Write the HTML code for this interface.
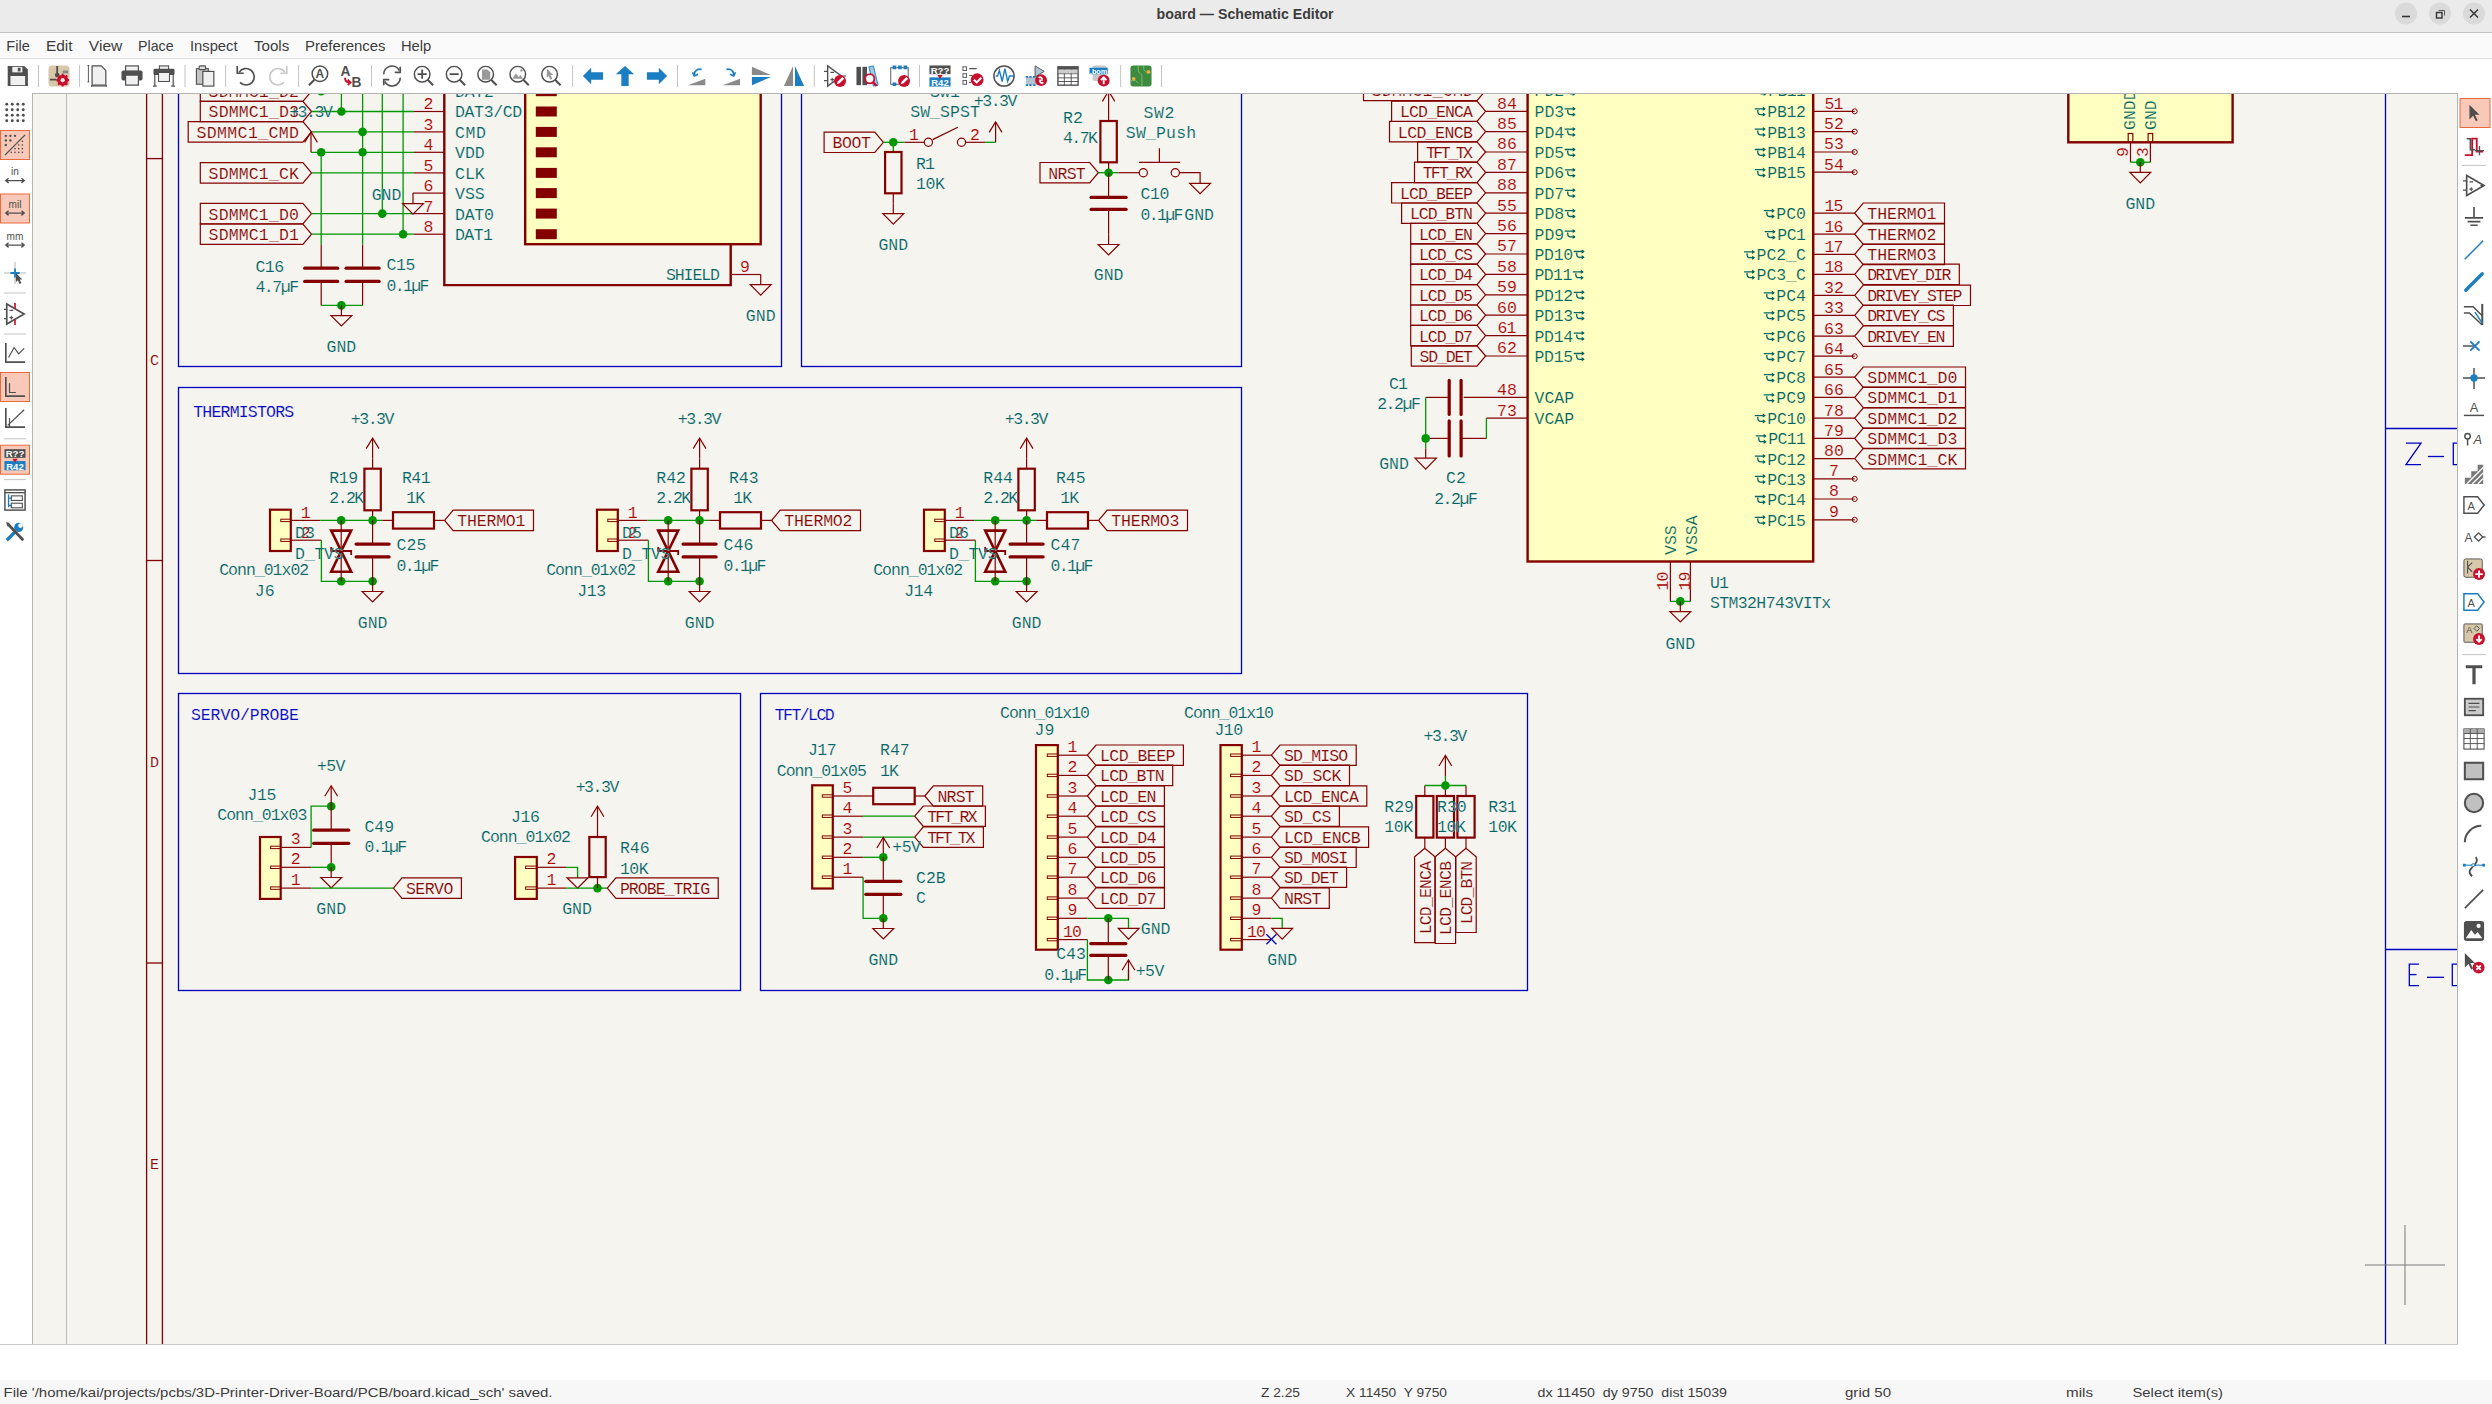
<!DOCTYPE html>
<html><head><meta charset="utf-8">
<style>
html,body{margin:0;padding:0;width:2492px;height:1404px;overflow:hidden;background:#ffffff;font-family:"Liberation Sans",sans-serif;}
#title{position:absolute;left:0;top:0;width:2492px;height:32px;background:#ebebeb;border-bottom:1px solid #c4c4c4;}
#title .t{position:absolute;left:0;width:2492px;top:5px;text-align:center;font-size:15.5px;font-weight:bold;color:#3d3d3d;}
#menu{position:absolute;left:0;top:33px;width:2492px;height:25px;background:#fafafa;border-bottom:1px solid #e0e0e0;}
#menu span{position:absolute;top:4px;font-size:15px;color:#3c3c3c;}
#tb{position:absolute;left:0;top:59px;width:2492px;height:34px;background:#ffffff;}
#status{position:absolute;left:0;top:1380px;width:2492px;height:24px;background:#f7f7f7;}
#status span{position:absolute;top:4px;font-size:14px;color:#3c3c3c;white-space:pre;}
svg text{font-family:"Liberation Sans",sans-serif;}
.cv text{font-family:"Liberation Mono",monospace;stroke:#f5f4ef;stroke-width:0.15px;paint-order:normal;}
.cv text.y{stroke:#ffffc2;}
</style></head><body>
<div id="title">
<svg style="position:absolute;left:2380px;top:0" width="112" height="32">
<circle cx="26" cy="13.5" r="11" fill="#dadada"/><line x1="22" y1="16.5" x2="30" y2="16.5" stroke="#333" stroke-width="1.6"/>
<circle cx="60" cy="13.5" r="11" fill="#dadada"/><rect x="56.5" y="12.5" width="5.5" height="5.5" fill="none" stroke="#333" stroke-width="1.4"/><polyline points="58.5,10.5 64.5,10.5 64.5,15.5" fill="none" stroke="#555" stroke-width="1"/>
<circle cx="94" cy="13.5" r="11" fill="#dadada"/><line x1="90" y1="9.5" x2="98" y2="17.5" stroke="#333" stroke-width="1.5"/><line x1="98" y1="9.5" x2="90" y2="17.5" stroke="#333" stroke-width="1.5"/>
</svg></div>
<div id="menu"></div>
<div id="tb"></div>
<svg style="position:absolute;left:0;top:0" width="1200" height="93"><g transform="translate(6.8,65) scale(0.9167)"><path d="M1,1 h18 l4,4 v18 h-22 z" fill="#4f4f4f"/><rect x="6" y="2" width="11" height="6" fill="#f0f0f0"/><rect x="12" y="3" width="3" height="4" fill="#4f4f4f"/><rect x="4" y="12" width="16" height="10" fill="#f0f0f0"/></g><line x1="38.5" y1="65" x2="38.5" y2="87" stroke="#c4c4c4" stroke-width="1"/><g transform="translate(48.0,65) scale(0.9167)"><rect x="0.5" y="0.5" width="23" height="23" rx="4" fill="#d6c8a8"/><path d="M10,1 v9 M2,16 h7" stroke="#4f4f4f" stroke-width="2"/><circle cx="10" cy="11" r="2.5" fill="#4f4f4f"/><rect x="16" y="6" width="6" height="3" fill="#888"/><circle cx="16" cy="16.5" r="6" fill="#c8102e"/><circle cx="16" cy="16.5" r="2.3" fill="#f2e6e6"/><path d="M16,9.5 v2 M16,21.5 v2 M9,16.5 h2 M21,16.5 h2 M11,11.5 l1.5,1.5 M19.5,20 l1.5,1.5 M11,21.5 l1.5,-1.5 M19.5,13 l1.5,-1.5" stroke="#c8102e" stroke-width="2.2"/></g><line x1="79.5" y1="65" x2="79.5" y2="87" stroke="#c4c4c4" stroke-width="1"/><g transform="translate(87.5,65) scale(0.9167)"><path d="M5,1 h10 l5,5 v16 h-15 z" fill="#f0f0f0" stroke="#4f4f4f" stroke-width="1.3"/><path d="M1,0.5 v18 M0,0.5 h2 M0,18.5 h2 M4.5,23 h16 M4.5,22 v2 M20.5,22 v2" stroke="#4f4f4f" stroke-width="1"/></g><g transform="translate(121.0,65) scale(0.9167)"><rect x="5" y="1" width="14" height="6" fill="#f0f0f0" stroke="#4f4f4f" stroke-width="1.3"/><rect x="0.5" y="6" width="23" height="11" rx="2" fill="#4f4f4f"/><path d="M5,11 h14 v11 h-14 z" fill="#f0f0f0" stroke="#4f4f4f" stroke-width="1.3"/></g><g transform="translate(153.0,65) scale(0.9167)"><rect x="7" y="1" width="10" height="4" fill="#f0f0f0" stroke="#4f4f4f" stroke-width="1.2"/><rect x="0.5" y="4" width="23" height="7" rx="1.5" fill="#4f4f4f"/><path d="M6,8 h12 v10 h-12 z" fill="#f0f0f0" stroke="#4f4f4f" stroke-width="1.2"/><path d="M2,10 v13 M22,10 v13 M0,23 h4 M20,23 h4" stroke="#4f4f4f" stroke-width="1.3"/></g><line x1="185" y1="65" x2="185" y2="87" stroke="#c4c4c4" stroke-width="1"/><g transform="translate(195.5,65) scale(0.9167)"><rect x="1" y="4" width="13" height="17" fill="#c4c4c4" stroke="#4f4f4f" stroke-width="1.2"/><rect x="4" y="1" width="7" height="4" rx="1" fill="#ddd" stroke="#4f4f4f" stroke-width="1.2"/><rect x="8" y="7" width="12" height="16" fill="#f0f0f0" stroke="#4f4f4f" stroke-width="1.3"/></g><line x1="225.6" y1="65" x2="225.6" y2="87" stroke="#c4c4c4" stroke-width="1"/><g transform="translate(234.5,65) scale(0.9167)"><path d="M5,8 A9,9 0 1 1 6,19" fill="none" stroke="#4f4f4f" stroke-width="1.8"/><path d="M3,1 v8 h7" fill="none" stroke="#4f4f4f" stroke-width="1.8"/></g><g transform="translate(267.5,65) scale(0.9167)"><path d="M19,8 A9,9 0 1 0 18,19" fill="none" stroke="#c8c8c8" stroke-width="1.8"/><path d="M21,1 v8 h-7" fill="none" stroke="#c8c8c8" stroke-width="1.8"/></g><line x1="298.6" y1="65" x2="298.6" y2="87" stroke="#c4c4c4" stroke-width="1"/><g transform="translate(308.0,65) scale(0.9167)"><circle cx="13" cy="9.5" r="8.5" fill="none" stroke="#4f4f4f" stroke-width="1.6"/><path d="M7,16 l-6,6" stroke="#4f4f4f" stroke-width="2.2"/><text x="13" y="14.5" font-size="13" font-weight="bold" text-anchor="middle" fill="#4f4f4f" font-family="Liberation Sans">A</text></g><g transform="translate(340.0,65) scale(0.9167)"><text x="6" y="12" font-size="15" font-weight="bold" text-anchor="middle" fill="#4f4f4f" font-family="Liberation Sans">A</text><text x="18" y="24" font-size="15" font-weight="bold" text-anchor="middle" fill="#4f4f4f" font-family="Liberation Sans">B</text><path d="M5.5,14 q0,5 5,5" fill="none" stroke="#c8102e" stroke-width="2.2"/><path d="M8.5,16 l3,3 l-3,3" fill="none" stroke="#c8102e" stroke-width="2"/></g><line x1="371.5" y1="65" x2="371.5" y2="87" stroke="#c4c4c4" stroke-width="1"/><g transform="translate(381.0,65) scale(0.9167)"><path d="M3,10 A9,9 0 0 1 20,6" fill="none" stroke="#4f4f4f" stroke-width="1.8"/><path d="M21,2 v6 h-6" fill="none" stroke="#4f4f4f" stroke-width="1.8"/><path d="M21,14 A9,9 0 0 1 4,18" fill="none" stroke="#4f4f4f" stroke-width="1.8"/><path d="M3,22 v-6 h6" fill="none" stroke="#4f4f4f" stroke-width="1.8"/></g><g transform="translate(413.0,65) scale(0.9167)"><circle cx="10" cy="10" r="8.5" fill="none" stroke="#4f4f4f" stroke-width="1.6"/><path d="M16,16 l6,6" stroke="#4f4f4f" stroke-width="2.2"/><path d="M10,5 v10 M5,10 h10" stroke="#4f4f4f" stroke-width="2"/></g><g transform="translate(445.0,65) scale(0.9167)"><circle cx="10" cy="10" r="8.5" fill="none" stroke="#4f4f4f" stroke-width="1.6"/><path d="M16,16 l6,6" stroke="#4f4f4f" stroke-width="2.2"/><path d="M5,10 h10" stroke="#4f4f4f" stroke-width="2"/></g><g transform="translate(476.5,65) scale(0.9167)"><circle cx="10" cy="10" r="8.5" fill="none" stroke="#4f4f4f" stroke-width="1.6"/><path d="M16,16 l6,6" stroke="#4f4f4f" stroke-width="2.2"/><path d="M6,5 h6 l3,3 v8 h-9 z" fill="#9a9a9a"/></g><g transform="translate(508.6,65) scale(0.9167)"><circle cx="10" cy="10" r="8.5" fill="none" stroke="#4f4f4f" stroke-width="1.6"/><path d="M16,16 l6,6" stroke="#4f4f4f" stroke-width="2.2"/><path d="M4,15 l4,-6 l3,4 l2,-2 l3,4 z" fill="#9a9a9a"/><circle cx="14" cy="6" r="1.3" fill="#9a9a9a"/></g><g transform="translate(540.4,65) scale(0.9167)"><circle cx="10" cy="10" r="8.5" fill="none" stroke="#4f4f4f" stroke-width="1.6"/><path d="M16,16 l6,6" stroke="#4f4f4f" stroke-width="2.2"/><path d="M7,4 l7,7 h-3 l2,4 l-2,1 l-2,-4 l-2,2 z" fill="#9a9a9a"/></g><line x1="572.6" y1="65" x2="572.6" y2="87" stroke="#c4c4c4" stroke-width="1"/><g transform="translate(582.0,65) scale(0.9167)"><path d="M1,12 l9,-9 v5 h13 v8 h-13 v5 z" fill="#1b7ec2"/></g><g transform="translate(614.0,65) scale(0.9167)"><path d="M12,1 l10,9 h-6 v13 h-8 v-13 h-6 z" fill="#1b7ec2"/></g><g transform="translate(646.0,65) scale(0.9167)"><path d="M23,12 l-9,-9 v5 h-13 v8 h13 v5 z" fill="#1b7ec2"/></g><line x1="677.5" y1="65" x2="677.5" y2="87" stroke="#c4c4c4" stroke-width="1"/><g transform="translate(687.0,65) scale(0.9167)"><path d="M1,22 l19,-7 v7 z" fill="#8a8a8a"/><path d="M8,12 a6,6 0 0 1 8,-7" fill="none" stroke="#1b7ec2" stroke-width="1.8"/><path d="M6,8 l2,4 l4,-2" fill="none" stroke="#1b7ec2" stroke-width="1.8"/></g><g transform="translate(719.0,65) scale(0.9167)"><path d="M4,22 l19,-7 v7 z" fill="#8a8a8a"/><path d="M16,12 a6,6 0 0 0 -8,-7" fill="none" stroke="#1b7ec2" stroke-width="1.8"/><path d="M18,8 l-2,4 l-4,-2" fill="none" stroke="#1b7ec2" stroke-width="1.8"/></g><g transform="translate(751.0,65) scale(0.9167)"><path d="M1,2 l21,9 h-21 z" fill="#8a8a8a"/><path d="M1,13 h21 l-21,9 z" fill="#1b7ec2"/></g><g transform="translate(783.0,65) scale(0.9167)"><path d="M11,1 v22 h-10 z" fill="#8a8a8a"/><path d="M13,1 v22 h10 z" fill="#1b7ec2"/></g><line x1="814.3" y1="65" x2="814.3" y2="87" stroke="#c4c4c4" stroke-width="1"/><g transform="translate(824.0,65) scale(0.9167)"><path d="M4,1 v22 l15,-11 z" fill="none" stroke="#4f4f4f" stroke-width="1.5"/><path d="M0,7 h4 M0,17 h4 M19,12 h5 M7,8 h4 M7,16 h4 M9,14 v4" stroke="#4f4f4f" stroke-width="1.2"/><circle cx="17.5" cy="17.5" r="6.5" fill="#c8102e"/><path d="M14,21 l1,-3 l5,-5 l2,2 l-5,5 z" fill="#fff"/></g><g transform="translate(856.0,65) scale(0.9167)"><rect x="0.5" y="2" width="5" height="20" fill="#4f4f4f"/><rect x="7" y="2" width="5" height="20" fill="#4f4f4f"/><path d="M14,2 l5,-1 l5,21 l-5,1 z" fill="#9fc8e0" stroke="#1b7ec2" stroke-width="1"/><circle cx="15" cy="15" r="5" fill="#fff" stroke="#c8102e" stroke-width="2"/><path d="M18.5,18.5 l4,4.5" stroke="#c8102e" stroke-width="2.5"/></g><g transform="translate(888.0,65) scale(0.9167)"><rect x="3" y="3" width="19" height="18" fill="none" stroke="#4f4f4f" stroke-width="1"/><path d="M5,0.5 h4 v4 h-4 z M11,0.5 h4 v4 h-4 z M17,0.5 h4 v4 h-4 z M5,19 h4 v4 h-4 z" fill="#1b7ec2"/><circle cx="17.5" cy="17.5" r="6.5" fill="#c8102e"/><path d="M14,21 l1,-3 l5,-5 l2,2 l-5,5 z" fill="#fff"/></g><line x1="919.5" y1="65" x2="919.5" y2="87" stroke="#c4c4c4" stroke-width="1"/><g transform="translate(929.0,65) scale(0.9167)"><rect x="0.5" y="0.5" width="23" height="9.5" fill="#4f4f4f"/><text x="12" y="9.3" font-size="10.5" font-weight="bold" text-anchor="middle" fill="#fff" font-family="Liberation Sans">R??</text><rect x="0.5" y="13.5" width="23" height="10" fill="#1b7ec2"/><text x="12" y="22.8" font-size="10.5" font-weight="bold" text-anchor="middle" fill="#fff" font-family="Liberation Sans">R42</text><path d="M9,11 h6 l-3,4 z" fill="#c8102e"/></g><g transform="translate(962.0,65) scale(0.9167)"><rect x="1" y="2" width="4" height="4" fill="none" stroke="#4f4f4f" stroke-width="1"/><rect x="1" y="9.5" width="4" height="4" fill="none" stroke="#4f4f4f" stroke-width="1"/><rect x="1" y="17" width="4" height="4" fill="none" stroke="#4f4f4f" stroke-width="1"/><path d="M8,4 h8 M8,11.5 h3 M8,19 h2" stroke="#4f4f4f" stroke-width="1.2"/><circle cx="16.5" cy="16" r="7" fill="#c8102e"/><path d="M13,16 l3,3 l5,-5" fill="none" stroke="#fff" stroke-width="2.2"/></g><g transform="translate(993.0,65) scale(0.9167)"><circle cx="12" cy="12" r="11" fill="none" stroke="#4f4f4f" stroke-width="1.6"/><path d="M3,12 h2 l2,-6 l3,12 l3,-14 l3,14 l2,-6 h5" fill="none" stroke="#1b7ec2" stroke-width="1.5"/></g><g transform="translate(1025.0,65) scale(0.9167)"><path d="M11,1 v12 l10,-6 z" fill="#b0c4d4" stroke="#4f4f4f" stroke-width="1"/><rect x="1" y="13" width="13" height="9" fill="#b0c4d4"/><path d="M2,12 v2 M6,12 v2 M10,12 v2 M2,21 v2 M6,21 v2 M10,21 v2" stroke="#1b7ec2" stroke-width="2.5"/><circle cx="17.5" cy="16.5" r="6.5" fill="#c8102e"/><path d="M15,14 a2,2 0 0 1 3,3 M20,19 a2,2 0 0 1 -3,-3" fill="none" stroke="#fff" stroke-width="1.8"/></g><g transform="translate(1057.0,65) scale(0.9167)"><rect x="1" y="2" width="22" height="20" fill="#fff" stroke="#4f4f4f" stroke-width="1.5"/><rect x="1" y="2" width="22" height="3" fill="#4f4f4f"/><path d="M1,9.5 h22 M1,14 h22 M1,18 h22 M8,5 v17 M15.5,5 v17" stroke="#4f4f4f" stroke-width="1"/><rect x="2" y="5.5" width="20" height="3.5" fill="#ccc"/></g><g transform="translate(1089.0,65) scale(0.9167)"><rect x="4" y="0.5" width="15" height="17" rx="2" fill="#c8c8c8"/><rect x="0.5" y="3" width="20" height="7" fill="#1b7ec2"/><text x="10.5" y="9.5" font-size="8" font-weight="bold" text-anchor="middle" fill="#fff" font-family="Liberation Sans">.bom</text><circle cx="16" cy="17" r="6.5" fill="#c8102e"/><path d="M16,21 v-7 M13,16.5 l3,-3 l3,3" fill="none" stroke="#fff" stroke-width="2"/></g><line x1="1120.6" y1="65" x2="1120.6" y2="87" stroke="#c4c4c4" stroke-width="1"/><g transform="translate(1130.0,65) scale(0.9167)"><rect x="0.5" y="0.5" width="23" height="23" rx="3" fill="#3e8a3e"/><path d="M9,1 v6 l4,4 v12 M15,1 v4 l3,3 h6 M1,17 h5 l3,3" fill="none" stroke="#7cbf6a" stroke-width="1"/><circle cx="4" cy="15" r="2" fill="#f0b040"/><circle cx="20" cy="7.5" r="2" fill="#f0b040"/></g><line x1="1161.5" y1="65" x2="1161.5" y2="87" stroke="#c4c4c4" stroke-width="1"/></svg><svg style="position:absolute;left:0;top:93px" width="32" height="1251"><g transform="translate(0,-93)"><g transform="translate(4,101.5) scale(0.9167)"><circle cx="3" cy="3" r="1.6" fill="#4f4f4f"/><circle cx="3" cy="9" r="1.6" fill="#4f4f4f"/><circle cx="3" cy="15" r="1.6" fill="#4f4f4f"/><circle cx="3" cy="21" r="1.6" fill="#4f4f4f"/><circle cx="9" cy="3" r="1.6" fill="#4f4f4f"/><circle cx="9" cy="9" r="1.6" fill="#4f4f4f"/><circle cx="9" cy="15" r="1.6" fill="#4f4f4f"/><circle cx="9" cy="21" r="1.6" fill="#4f4f4f"/><circle cx="15" cy="3" r="1.6" fill="#4f4f4f"/><circle cx="15" cy="9" r="1.6" fill="#4f4f4f"/><circle cx="15" cy="15" r="1.6" fill="#4f4f4f"/><circle cx="15" cy="21" r="1.6" fill="#4f4f4f"/><circle cx="21" cy="3" r="1.6" fill="#4f4f4f"/><circle cx="21" cy="9" r="1.6" fill="#4f4f4f"/><circle cx="21" cy="15" r="1.6" fill="#4f4f4f"/><circle cx="21" cy="21" r="1.6" fill="#4f4f4f"/></g><rect x="0.5" y="130.5" width="29" height="29" fill="#f8c9b8" stroke="#ea6a3c" stroke-width="1"/><g transform="translate(4,134.0) scale(0.9167)"><circle cx="2" cy="2" r="1.3" fill="#4f4f4f"/><circle cx="7" cy="2" r="1.3" fill="#4f4f4f"/><circle cx="12" cy="2" r="1.3" fill="#4f4f4f"/><circle cx="2" cy="7" r="1.3" fill="#4f4f4f"/><circle cx="7" cy="7" r="1.3" fill="#4f4f4f"/><circle cx="2" cy="12" r="1.3" fill="#4f4f4f"/><circle cx="20" cy="8" r="0.9" fill="#4f4f4f"/><circle cx="16" cy="12" r="0.9" fill="#4f4f4f"/><circle cx="20" cy="12" r="0.9" fill="#4f4f4f"/><circle cx="12" cy="16" r="0.9" fill="#4f4f4f"/><circle cx="16" cy="16" r="0.9" fill="#4f4f4f"/><circle cx="20" cy="16" r="0.9" fill="#4f4f4f"/><circle cx="8" cy="20" r="0.9" fill="#4f4f4f"/><circle cx="12" cy="20" r="0.9" fill="#4f4f4f"/><circle cx="16" cy="20" r="0.9" fill="#4f4f4f"/><circle cx="20" cy="20" r="0.9" fill="#4f4f4f"/><path d="M1,23 L23,1" stroke="#4f4f4f" stroke-width="1.4"/></g><g transform="translate(4,165.0) scale(0.9167)"><text x="12" y="11" font-size="11" text-anchor="middle" fill="#4f4f4f" font-family="Liberation Sans">in</text><path d="M2,17 h20 M5,14.5 l-3,2.5 l3,2.5 M19,14.5 l3,2.5 l-3,2.5" fill="none" stroke="#4f4f4f" stroke-width="1.5"/></g><rect x="0.5" y="194.0" width="29" height="29" fill="#f8c9b8" stroke="#ea6a3c" stroke-width="1"/><g transform="translate(4,197.5) scale(0.9167)"><text x="12" y="11" font-size="11" text-anchor="middle" fill="#4f4f4f" font-family="Liberation Sans">mil</text><path d="M2,17 h20 M5,14.5 l-3,2.5 l3,2.5 M19,14.5 l3,2.5 l-3,2.5" fill="none" stroke="#4f4f4f" stroke-width="1.5"/></g><g transform="translate(4,229.5) scale(0.9167)"><text x="12" y="11" font-size="11" text-anchor="middle" fill="#4f4f4f" font-family="Liberation Sans">mm</text><path d="M2,17 h20 M5,14.5 l-3,2.5 l3,2.5 M19,14.5 l3,2.5 l-3,2.5" fill="none" stroke="#4f4f4f" stroke-width="1.5"/></g><g transform="translate(4,262.0) scale(0.9167)"><path d="M12,0 v24 M0,12 h24" stroke="#999" stroke-width="0.8"/><path d="M12,7 v10 M7,12 h10" stroke="#1b7ec2" stroke-width="2"/><path d="M13,12 l7,7 h-3 l2,4 l-2,1 l-2,-4 l-2,2 z" fill="#4f4f4f"/></g><line x1="4" y1="293" x2="26" y2="293" stroke="#c4c4c4" stroke-width="1"/><g transform="translate(4,303.0) scale(0.9167)"><path d="M3,1 v22 l19,-11 z" fill="none" stroke="#4f4f4f" stroke-width="1.8"/><path d="M0,7 h3 M0,17 h3 M6,8 h4 M6,16 h4 M8,14 v4" stroke="#4f4f4f" stroke-width="1.2"/><path d="M12,0 v6 M12,18 v6" stroke="#c8102e" stroke-width="1.8"/></g><line x1="4" y1="334" x2="26" y2="334" stroke="#c4c4c4" stroke-width="1"/><g transform="translate(4,342.0) scale(0.9167)"><path d="M2,1 v21 h21" fill="none" stroke="#4f4f4f" stroke-width="1.8"/><path d="M5,17 l6,-11 l5,7 l6,-6" fill="none" stroke="#4f4f4f" stroke-width="1.3"/></g><rect x="0.5" y="372.5" width="29" height="29" fill="#f8c9b8" stroke="#ea6a3c" stroke-width="1"/><g transform="translate(4,376.0) scale(0.9167)"><path d="M2,1 v21 h21" fill="none" stroke="#4f4f4f" stroke-width="1.8"/><path d="M6,8 v10 h7" fill="none" stroke="#4f4f4f" stroke-width="1.3"/></g><g transform="translate(4,407.0) scale(0.9167)"><path d="M2,1 v21 h21" fill="none" stroke="#4f4f4f" stroke-width="1.8"/><path d="M4,20 l18,-17 M6,12 v10" fill="none" stroke="#4f4f4f" stroke-width="1.3"/></g><line x1="4" y1="438.8" x2="26" y2="438.8" stroke="#c4c4c4" stroke-width="1"/><rect x="0.5" y="445.2" width="29" height="29" fill="#f8c9b8" stroke="#ea6a3c" stroke-width="1"/><g transform="translate(4,448.7) scale(0.9167)"><rect x="0.5" y="0.5" width="23" height="9.5" fill="#4f4f4f"/><text x="12" y="9.3" font-size="10.5" font-weight="bold" text-anchor="middle" fill="#fff" font-family="Liberation Sans">R??</text><rect x="0.5" y="13.5" width="23" height="10" fill="#1b7ec2"/><text x="12" y="22.8" font-size="10.5" font-weight="bold" text-anchor="middle" fill="#fff" font-family="Liberation Sans">R42</text><path d="M9,11 h6 l-3,4 z" fill="#c8102e"/></g><line x1="4" y1="479.6" x2="26" y2="479.6" stroke="#c4c4c4" stroke-width="1"/><g transform="translate(4,489.0) scale(0.9167)"><rect x="1" y="1" width="22" height="22" fill="none" stroke="#4f4f4f" stroke-width="1.6"/><path d="M1,4 h22" stroke="#4f4f4f" stroke-width="1.5"/><path d="M5,6 v14 M5,10 h3 M5,18 h3" stroke="#1b7ec2" stroke-width="1.5"/><rect x="8" y="7.5" width="12" height="5" fill="none" stroke="#4f4f4f" stroke-width="1.2"/><rect x="8" y="15.5" width="12" height="5" fill="none" stroke="#4f4f4f" stroke-width="1.2"/></g><g transform="translate(4,521.0) scale(0.9167)"><path d="M3,21 l9,-9" stroke="#1b7ec2" stroke-width="3.5"/><circle cx="16" cy="7" r="5" fill="#1b7ec2"/><circle cx="18" cy="5" r="2.5" fill="#fafafa"/><path d="M4,3 l17,18" stroke="#4f4f4f" stroke-width="3"/><path d="M2,1 l3,1 l1,3 l-2,1 z" fill="#4f4f4f"/></g></g></svg>
<svg style="position:absolute;left:0;top:0" width="2492" height="1404" pointer-events="none"><rect x="2460" y="98.5" width="30" height="29" fill="#f8c9b8" stroke="#ea6a3c" stroke-width="1"/><g transform="translate(2463,102.0) scale(0.9167)"><path d="M7,3 l11,11 h-5 l3,6 l-2,1 l-3,-6 l-4,4 z" fill="#4f4f4f"/></g><g transform="translate(2463,135.0) scale(0.9167)"><path d="M2,22 h8 v-18 h5 v14 h7" fill="none" stroke="#c8102e" stroke-width="2"/><path d="M4,4 h4 v12 h5" fill="none" stroke="#4f4f4f" stroke-width="1.6"/><path d="M18,12 v10 M13,17 h10" stroke="#4f4f4f" stroke-width="1.4"/></g><line x1="2462" y1="165.4" x2="2486" y2="165.4" stroke="#c4c4c4" stroke-width="1"/><g transform="translate(2463,174.5) scale(0.9167)"><path d="M4,1 v22 l19,-11 z" fill="none" stroke="#4f4f4f" stroke-width="1.8"/><path d="M0,7 h4 M0,17 h4 M19,12 h5 M7,8 h4 M7,16 h4 M9,14 v4" stroke="#4f4f4f" stroke-width="1.2"/></g><g transform="translate(2463,206.0) scale(0.9167)"><path d="M12,1 v12 M2,13 h20 M5,17 h14 M8,21 h8" stroke="#4f4f4f" stroke-width="1.8"/></g><g transform="translate(2463,239.0) scale(0.9167)"><path d="M2,22 L22,2" stroke="#1b7ec2" stroke-width="1.6"/></g><g transform="translate(2463,271.0) scale(0.9167)"><path d="M3,21 L21,3" stroke="#1b7ec2" stroke-width="3.6" stroke-linecap="round"/></g><g transform="translate(2463,303.0) scale(0.9167)"><path d="M21,1 v23" stroke="#4f4f4f" stroke-width="2.2"/><path d="M1,4 h10 l10,10 M1,11 h6 l14,13" fill="none" stroke="#4f4f4f" stroke-width="1.6"/><path d="M13,10 l8,12" stroke="#1b7ec2" stroke-width="1.6"/></g><g transform="translate(2463,335.0) scale(0.9167)"><path d="M0,12 h12" stroke="#4f4f4f" stroke-width="1.6"/><path d="M8,7 l10,10 M18,7 l-10,10" stroke="#1b7ec2" stroke-width="2"/></g><g transform="translate(2463,367.0) scale(0.9167)"><path d="M0,12 h24 M12,1 v23" stroke="#4f4f4f" stroke-width="1.6"/><circle cx="12" cy="12" r="4" fill="#1b7ec2"/></g><g transform="translate(2463,398.0) scale(0.9167)"><text x="12" y="15" font-size="14" text-anchor="middle" fill="#4f4f4f" font-family="Liberation Sans">A</text><path d="M1,19 h22" stroke="#4f4f4f" stroke-width="1.6"/></g><g transform="translate(2463,429.0) scale(0.9167)"><circle cx="5" cy="8" r="3" fill="none" stroke="#4f4f4f" stroke-width="1.6"/><path d="M5,11 v7" stroke="#4f4f4f" stroke-width="1.6"/><text x="16" y="16" font-size="14" font-style="italic" text-anchor="middle" fill="#4f4f4f" font-family="Liberation Sans">A</text></g><g transform="translate(2463,463.0) scale(0.9167)"><path d="M2,23 v-7 h7 v-7 h7 v-7 h6 v21 z" fill="#777"/><path d="M10,23 l12,-12 M4,23 l18,-18 M16,23 l6,-6" stroke="#fafafa" stroke-width="1.5"/></g><g transform="translate(2463,494.0) scale(0.9167)"><path d="M1,3 h15 l7,9 l-7,9 h-15 z" fill="none" stroke="#4f4f4f" stroke-width="1.6"/><text x="9" y="17" font-size="12" text-anchor="middle" fill="#4f4f4f" font-family="Liberation Sans">A</text><path d="M22,12 h2" stroke="#1b7ec2" stroke-width="1.5"/></g><g transform="translate(2463,526.0) scale(0.9167)"><text x="6" y="17" font-size="13" text-anchor="middle" fill="#4f4f4f" font-family="Liberation Sans">A</text><path d="M17,7.5 l4.5,4.5 l-4.5,4.5 l-4.5,-4.5 z" fill="none" stroke="#4f4f4f" stroke-width="1.5"/><path d="M21.5,12 h3" stroke="#4f4f4f" stroke-width="1.5"/></g><g transform="translate(2463,558.0) scale(0.9167)"><rect x="1" y="1" width="20" height="20" rx="2" fill="#d6c8a8" stroke="#4f4f4f" stroke-width="1"/><path d="M5,3 v14 M5,10 l5,-5 M5,10 l5,5" stroke="#4f4f4f" stroke-width="1.2"/><circle cx="17.5" cy="17.5" r="6.5" fill="#c8102e"/><path d="M17.5,13.5 v8 M13.5,17.5 h8" stroke="#fff" stroke-width="2"/></g><g transform="translate(2463,591.0) scale(0.9167)"><path d="M1,3 h15 l7,9 l-7,9 h-15 z" fill="none" stroke="#1b7ec2" stroke-width="1.6"/><text x="9" y="17" font-size="12" text-anchor="middle" fill="#4f4f4f" font-family="Liberation Sans">A</text></g><g transform="translate(2463,623.0) scale(0.9167)"><rect x="1" y="1" width="20" height="20" rx="1" fill="#d6c8a8" stroke="#4f4f4f" stroke-width="1"/><text x="7" y="11" font-size="10" text-anchor="middle" fill="#4f4f4f" font-family="Liberation Sans">A</text><path d="M15,3 l3,3 l-3,3 l-3,-3 z" fill="none" stroke="#4f4f4f" stroke-width="1"/><circle cx="17.5" cy="17.5" r="6.5" fill="#c8102e"/><path d="M17.5,13.5 v7 M14.5,17.5 l3,3 l3,-3" fill="none" stroke="#fff" stroke-width="2"/></g><line x1="2462" y1="654.6" x2="2486" y2="654.6" stroke="#c4c4c4" stroke-width="1"/><g transform="translate(2463,664.0) scale(0.9167)"><path d="M3,3 h18 M12,3 v19" stroke="#4f4f4f" stroke-width="3.5"/></g><g transform="translate(2463,696.0) scale(0.9167)"><rect x="2" y="3" width="20" height="18" fill="#ccc" stroke="#4f4f4f" stroke-width="2"/><path d="M6,8 h12 M6,12 h12 M6,16 h8" stroke="#4f4f4f" stroke-width="1.2"/></g><g transform="translate(2463,728.0) scale(0.9167)"><rect x="1" y="1" width="22" height="22" fill="#fff" stroke="#4f4f4f" stroke-width="1.2"/><rect x="1" y="1" width="22" height="5" fill="#aaa"/><path d="M1,6 h22 M1,11.5 h22 M1,17 h22 M8,1 v22 M15.5,1 v22" stroke="#4f4f4f" stroke-width="1"/></g><g transform="translate(2463,760.0) scale(0.9167)"><rect x="2" y="3" width="20" height="18" fill="#c0c0c0" stroke="#4f4f4f" stroke-width="2.2"/></g><g transform="translate(2463,792.0) scale(0.9167)"><circle cx="12" cy="12" r="10" fill="#c0c0c0" stroke="#4f4f4f" stroke-width="2.2"/></g><g transform="translate(2463,824.0) scale(0.9167)"><path d="M2,20 A18,18 0 0 1 20,2" fill="none" stroke="#4f4f4f" stroke-width="2.2"/></g><g transform="translate(2463,856.0) scale(0.9167)"><path d="M10,22 C0,14 20,10 14,1" fill="none" stroke="#4f4f4f" stroke-width="2"/><path d="M1,10 h22" stroke="#1b7ec2" stroke-width="1.2"/><rect x="0" y="8.5" width="3" height="3" fill="#1b7ec2"/><rect x="21" y="8.5" width="3" height="3" fill="#1b7ec2"/><circle cx="11" cy="10" r="1.6" fill="#fff" stroke="#1b7ec2" stroke-width="1"/></g><g transform="translate(2463,888.0) scale(0.9167)"><path d="M2,22 L22,2" stroke="#4f4f4f" stroke-width="1.8"/></g><g transform="translate(2463,920.0) scale(0.9167)"><rect x="1" y="1" width="22" height="22" rx="3" fill="#4f4f4f"/><path d="M3,20 l6,-9 l4,5 l3,-3 l5,7 z" fill="#fafafa"/><circle cx="17" cy="6.5" r="2.3" fill="#fafafa"/></g><g transform="translate(2463,952.0) scale(0.9167)"><path d="M2,1 l11,11 h-5 l3,6 l-2,1 l-3,-6 l-4,4 z" fill="#4f4f4f"/><circle cx="17" cy="17" r="6.5" fill="#c8102e"/><path d="M14.5,14.5 l5,5 M19.5,14.5 l-5,5" stroke="#fff" stroke-width="2"/></g></svg>
<svg class="cv" style="position:absolute;left:0;top:0" width="2492" height="1404">
<defs><clipPath id="cv"><rect x="33" y="94" width="2424" height="1250"/></clipPath></defs>
<rect x="32.5" y="93.5" width="2425" height="1251" fill="#f5f4ef" stroke="#b4b4b4" stroke-width="1"/><line x1="0" y1="1344.5" x2="2458" y2="1344.5" stroke="#c8c8c8" stroke-width="1"/>
<g clip-path="url(#cv)">
<line x1="66.5" y1="94.0" x2="66.5" y2="1344.0" stroke="#b9b9b9" stroke-width="1"/>
<line x1="146.6" y1="94.0" x2="146.6" y2="1344.0" stroke="#840000" stroke-width="1.3"/>
<line x1="162.4" y1="94.0" x2="162.4" y2="1344.0" stroke="#840000" stroke-width="1.3"/>
<line x1="146.6" y1="158.6" x2="162.4" y2="158.6" stroke="#840000" stroke-width="1.3"/>
<line x1="146.6" y1="560.5" x2="162.4" y2="560.5" stroke="#840000" stroke-width="1.3"/>
<line x1="146.6" y1="963.0" x2="162.4" y2="963.0" stroke="#840000" stroke-width="1.3"/>
<text x="154.4" y="364.9" fill="#840000" font-size="15" text-anchor="middle">C</text>
<text x="154.4" y="767.2" fill="#840000" font-size="15" text-anchor="middle">D</text>
<text x="154.4" y="1169.2" fill="#840000" font-size="15" text-anchor="middle">E</text>
<line x1="2385.5" y1="94.0" x2="2385.5" y2="1344.0" stroke="#0000c2" stroke-width="1.3"/>
<line x1="2385.5" y1="428.5" x2="2458.0" y2="428.5" stroke="#0000c2" stroke-width="1.3"/>
<line x1="2385.5" y1="949.5" x2="2458.0" y2="949.5" stroke="#0000c2" stroke-width="1.3"/>
<polyline points="2406.0,443.2 2421.0,443.2 2406.0,464.6 2421.0,464.6" stroke="#0000c2" stroke-width="1.3" fill="none"/>
<line x1="2428.0" y1="456.5" x2="2444.0" y2="456.5" stroke="#0000c2" stroke-width="1.3"/>
<polyline points="2460.0,443.2 2453.3,443.2 2453.3,464.6 2460.0,464.6" stroke="#0000c2" stroke-width="1.3" fill="none"/>
<polyline points="2419.0,964.2 2409.3,964.2 2409.3,985.6 2419.0,985.6" stroke="#0000c2" stroke-width="1.3" fill="none"/>
<line x1="2409.3" y1="974.6" x2="2416.5" y2="974.6" stroke="#0000c2" stroke-width="1.3"/>
<line x1="2427.0" y1="977.3" x2="2444.0" y2="977.3" stroke="#0000c2" stroke-width="1.3"/>
<polyline points="2460.0,964.2 2452.3,964.2 2452.3,985.6 2460.0,985.6" stroke="#0000c2" stroke-width="1.3" fill="none"/>
<line x1="2365.0" y1="1265.0" x2="2445.0" y2="1265.0" stroke="#7a7a7a" stroke-width="1"/>
<line x1="2405.0" y1="1225.0" x2="2405.0" y2="1305.0" stroke="#7a7a7a" stroke-width="1"/>
<rect x="178.5" y="60.0" width="603.0" height="306.5" stroke="#0000c2" stroke-width="1.3" fill="none"/>
<polygon points="311.5,91.2 302.9,81.0 200.3,81.0 200.3,101.4 302.9,101.4" stroke="#840000" stroke-width="1.2" fill="none"/>
<text x="208.6" y="97.1" fill="#840000" font-size="16.5" text-anchor="start" textLength="90.3" lengthAdjust="spacing">SDMMC1_D2</text>
<polygon points="311.5,111.5 302.9,101.3 200.3,101.3 200.3,121.7 302.9,121.7" stroke="#840000" stroke-width="1.2" fill="none"/>
<text x="208.6" y="117.4" fill="#840000" font-size="16.5" text-anchor="start" textLength="90.3" lengthAdjust="spacing">SDMMC1_D3</text>
<polygon points="311.5,131.9 302.9,121.7 188.2,121.7 188.2,142.1 302.9,142.1" stroke="#840000" stroke-width="1.2" fill="none"/>
<text x="196.5" y="137.8" fill="#840000" font-size="16.5" text-anchor="start" textLength="102.4" lengthAdjust="spacing">SDMMC1_CMD</text>
<polygon points="311.5,172.9 302.9,162.7 200.3,162.7 200.3,183.1 302.9,183.1" stroke="#840000" stroke-width="1.2" fill="none"/>
<text x="208.6" y="178.8" fill="#840000" font-size="16.5" text-anchor="start" textLength="90.3" lengthAdjust="spacing">SDMMC1_CK</text>
<polygon points="311.5,213.6 302.9,203.4 200.3,203.4 200.3,223.8 302.9,223.8" stroke="#840000" stroke-width="1.2" fill="none"/>
<text x="208.6" y="219.5" fill="#840000" font-size="16.5" text-anchor="start" textLength="90.3" lengthAdjust="spacing">SDMMC1_D0</text>
<polygon points="311.5,234.2 302.9,224.0 200.3,224.0 200.3,244.4 302.9,244.4" stroke="#840000" stroke-width="1.2" fill="none"/>
<text x="208.6" y="240.1" fill="#840000" font-size="16.5" text-anchor="start" textLength="90.3" lengthAdjust="spacing">SDMMC1_D1</text>
<polyline points="311.5,91.2 414.0,91.2" stroke="#009600" stroke-width="1.3" fill="none"/>
<polyline points="311.5,111.5 414.0,111.5" stroke="#009600" stroke-width="1.3" fill="none"/>
<polyline points="311.5,131.9 414.0,131.9" stroke="#009600" stroke-width="1.3" fill="none"/>
<polyline points="311.5,172.9 414.0,172.9" stroke="#009600" stroke-width="1.3" fill="none"/>
<polyline points="311.5,213.6 414.0,213.6" stroke="#009600" stroke-width="1.3" fill="none"/>
<polyline points="311.5,234.2 414.0,234.2" stroke="#009600" stroke-width="1.3" fill="none"/>
<polyline points="311.0,152.3 414.0,152.3" stroke="#009600" stroke-width="1.3" fill="none"/>
<polyline points="341.4,94.0 341.4,111.5" stroke="#009600" stroke-width="1.3" fill="none"/>
<polyline points="362.6,94.0 362.6,244.7" stroke="#009600" stroke-width="1.3" fill="none"/>
<polyline points="382.3,94.0 382.3,213.6" stroke="#009600" stroke-width="1.3" fill="none"/>
<polyline points="403.1,94.0 403.1,234.2" stroke="#009600" stroke-width="1.3" fill="none"/>
<polyline points="321.2,152.3 321.2,244.7" stroke="#009600" stroke-width="1.3" fill="none"/>
<circle cx="321.2" cy="91.2" r="4.3" fill="#009600"/>
<circle cx="341.4" cy="111.5" r="4.3" fill="#009600"/>
<circle cx="362.6" cy="131.9" r="4.3" fill="#009600"/>
<circle cx="321.2" cy="152.3" r="4.3" fill="#009600"/>
<circle cx="362.6" cy="152.3" r="4.3" fill="#009600"/>
<circle cx="382.3" cy="213.6" r="4.3" fill="#009600"/>
<circle cx="403.1" cy="234.2" r="4.3" fill="#009600"/>
<line x1="311.0" y1="152.3" x2="311.0" y2="131.9" stroke="#840000" stroke-width="1.2"/>
<polyline points="304.6,142.4 311.0,131.9 317.4,142.4" stroke="#840000" stroke-width="1.2" fill="none"/>
<text x="311.0" y="117.4" fill="#006464" font-size="16.5" text-anchor="middle" textLength="43.7" lengthAdjust="spacing">+3.3V</text>
<line x1="414.0" y1="91.2" x2="444.3" y2="91.2" stroke="#840000" stroke-width="1.2"/>
<text x="428.5" y="89.1" fill="#a90000" font-size="16.5" text-anchor="middle" textLength="9.0" lengthAdjust="spacing">1</text>
<line x1="414.0" y1="111.5" x2="444.3" y2="111.5" stroke="#840000" stroke-width="1.2"/>
<text x="428.5" y="109.4" fill="#a90000" font-size="16.5" text-anchor="middle" textLength="9.9" lengthAdjust="spacing">2</text>
<line x1="414.0" y1="131.9" x2="444.3" y2="131.9" stroke="#840000" stroke-width="1.2"/>
<text x="428.5" y="129.8" fill="#a90000" font-size="16.5" text-anchor="middle" textLength="9.9" lengthAdjust="spacing">3</text>
<line x1="414.0" y1="152.3" x2="444.3" y2="152.3" stroke="#840000" stroke-width="1.2"/>
<text x="428.5" y="150.2" fill="#a90000" font-size="16.5" text-anchor="middle" textLength="9.9" lengthAdjust="spacing">4</text>
<line x1="414.0" y1="172.9" x2="444.3" y2="172.9" stroke="#840000" stroke-width="1.2"/>
<text x="428.5" y="170.8" fill="#a90000" font-size="16.5" text-anchor="middle" textLength="9.9" lengthAdjust="spacing">5</text>
<line x1="414.0" y1="193.1" x2="444.3" y2="193.1" stroke="#840000" stroke-width="1.2"/>
<text x="428.5" y="191.0" fill="#a90000" font-size="16.5" text-anchor="middle" textLength="9.9" lengthAdjust="spacing">6</text>
<line x1="414.0" y1="213.6" x2="444.3" y2="213.6" stroke="#840000" stroke-width="1.2"/>
<text x="428.5" y="211.5" fill="#a90000" font-size="16.5" text-anchor="middle" textLength="9.9" lengthAdjust="spacing">7</text>
<line x1="414.0" y1="234.2" x2="444.3" y2="234.2" stroke="#840000" stroke-width="1.2"/>
<text x="428.5" y="232.1" fill="#a90000" font-size="16.5" text-anchor="middle" textLength="9.9" lengthAdjust="spacing">8</text>
<text x="455.0" y="97.1" fill="#006464" font-size="16.5" text-anchor="start" textLength="38.9" lengthAdjust="spacing">DAT2</text>
<text x="455.0" y="117.4" fill="#006464" font-size="16.5" text-anchor="start" textLength="67.2" lengthAdjust="spacing">DAT3/CD</text>
<text x="455.0" y="137.8" fill="#006464" font-size="16.5" text-anchor="start" textLength="30.8" lengthAdjust="spacing">CMD</text>
<text x="455.0" y="158.2" fill="#006464" font-size="16.5" text-anchor="start" textLength="29.7" lengthAdjust="spacing">VDD</text>
<text x="455.0" y="178.8" fill="#006464" font-size="16.5" text-anchor="start" textLength="29.7" lengthAdjust="spacing">CLK</text>
<text x="455.0" y="199.0" fill="#006464" font-size="16.5" text-anchor="start" textLength="29.7" lengthAdjust="spacing">VSS</text>
<text x="455.0" y="219.5" fill="#006464" font-size="16.5" text-anchor="start" textLength="38.9" lengthAdjust="spacing">DAT0</text>
<text x="455.0" y="240.1" fill="#006464" font-size="16.5" text-anchor="start" textLength="38.0" lengthAdjust="spacing">DAT1</text>
<line x1="414.0" y1="193.1" x2="413.0" y2="193.1" stroke="#840000" stroke-width="1.2"/>
<line x1="413.0" y1="193.1" x2="413.0" y2="203.7" stroke="#840000" stroke-width="1.2"/>
<polygon points="402.6,203.7 423.4,203.7 413.0,214.1" stroke="#840000" stroke-width="1.2" fill="none"/>
<text x="386.5" y="199.7" fill="#006464" font-size="16.5" text-anchor="middle" textLength="29.7" lengthAdjust="spacing">GND</text>
<polyline points="444.3,60.0 444.3,285.1 730.7,285.1 730.7,244.2" stroke="#840000" stroke-width="2.4" fill="none"/>
<rect x="525.2" y="60.0" width="235.5" height="184.2" stroke="#840000" stroke-width="2.4" fill="#ffffc2"/>
<rect x="535.8" y="86.2" width="21.0" height="10.0" fill="#840000"/>
<rect x="535.8" y="106.5" width="21.0" height="10.0" fill="#840000"/>
<rect x="535.8" y="126.9" width="21.0" height="10.0" fill="#840000"/>
<rect x="535.8" y="147.3" width="21.0" height="10.0" fill="#840000"/>
<rect x="535.8" y="167.9" width="21.0" height="10.0" fill="#840000"/>
<rect x="535.8" y="188.1" width="21.0" height="10.0" fill="#840000"/>
<rect x="535.8" y="208.6" width="21.0" height="10.0" fill="#840000"/>
<rect x="535.8" y="229.2" width="21.0" height="10.0" fill="#840000"/>
<text x="719.8" y="280.4" fill="#006464" font-size="16.5" text-anchor="end" textLength="53.7" lengthAdjust="spacing">SHIELD</text>
<line x1="730.7" y1="274.5" x2="760.7" y2="274.5" stroke="#840000" stroke-width="1.2"/>
<text x="745.0" y="271.9" fill="#a90000" font-size="16.5" text-anchor="middle" textLength="9.9" lengthAdjust="spacing">9</text>
<line x1="760.7" y1="274.5" x2="760.7" y2="284.7" stroke="#840000" stroke-width="1.2"/>
<polygon points="750.3,284.7 771.1,284.7 760.7,295.1" stroke="#840000" stroke-width="1.2" fill="none"/>
<text x="760.7" y="321.4" fill="#006464" font-size="16.5" text-anchor="middle" textLength="29.7" lengthAdjust="spacing">GND</text>
<line x1="321.2" y1="244.7" x2="321.2" y2="268.2" stroke="#840000" stroke-width="1.2"/>
<line x1="362.6" y1="244.7" x2="362.6" y2="268.2" stroke="#840000" stroke-width="1.2"/>
<line x1="304.7" y1="268.2" x2="337.7" y2="268.2" stroke="#840000" stroke-width="3.2" stroke-linecap="round"/>
<line x1="304.7" y1="281.4" x2="337.7" y2="281.4" stroke="#840000" stroke-width="3.2" stroke-linecap="round"/>
<line x1="346.1" y1="268.2" x2="379.1" y2="268.2" stroke="#840000" stroke-width="3.2" stroke-linecap="round"/>
<line x1="346.1" y1="281.4" x2="379.1" y2="281.4" stroke="#840000" stroke-width="3.2" stroke-linecap="round"/>
<line x1="321.2" y1="281.4" x2="321.2" y2="305.4" stroke="#840000" stroke-width="1.2"/>
<line x1="362.6" y1="281.4" x2="362.6" y2="305.4" stroke="#840000" stroke-width="1.2"/>
<polyline points="321.2,305.4 362.6,305.4" stroke="#009600" stroke-width="1.3" fill="none"/>
<circle cx="341.4" cy="305.4" r="4.3" fill="#009600"/>
<line x1="341.4" y1="305.4" x2="341.4" y2="315.6" stroke="#840000" stroke-width="1.2"/>
<polygon points="331.0,315.6 351.8,315.6 341.4,326.0" stroke="#840000" stroke-width="1.2" fill="none"/>
<text x="341.4" y="352.3" fill="#006464" font-size="16.5" text-anchor="middle" textLength="29.7" lengthAdjust="spacing">GND</text>
<text x="255.4" y="272.1" fill="#006464" font-size="16.5" text-anchor="start" textLength="28.8" lengthAdjust="spacing">C16</text>
<text x="255.4" y="291.9" fill="#006464" font-size="16.5" text-anchor="start" textLength="43.7" lengthAdjust="spacing">4.7µF</text>
<text x="386.6" y="270.3" fill="#006464" font-size="16.5" text-anchor="start" textLength="28.8" lengthAdjust="spacing">C15</text>
<text x="386.6" y="290.5" fill="#006464" font-size="16.5" text-anchor="start" textLength="42.8" lengthAdjust="spacing">0.1µF</text>
<rect x="801.5" y="60.0" width="440.0" height="306.5" stroke="#0000c2" stroke-width="1.3" fill="none"/>
<polygon points="883.4,142.3 874.8,132.1 824.1,132.1 824.1,152.5 874.8,152.5" stroke="#840000" stroke-width="1.2" fill="none"/>
<text x="832.4" y="148.2" fill="#840000" font-size="16.5" text-anchor="start" textLength="38.4" lengthAdjust="spacing">BOOT</text>
<polyline points="883.4,142.3 904.7,142.3" stroke="#009600" stroke-width="1.3" fill="none"/>
<circle cx="893.3" cy="142.3" r="4.3" fill="#009600"/>
<line x1="904.7" y1="142.3" x2="924.3" y2="142.3" stroke="#840000" stroke-width="1.2"/>
<circle cx="928.4" cy="142.3" r="4.1" fill="none" stroke="#840000" stroke-width="1.2"/>
<circle cx="961.5" cy="142.3" r="4.1" fill="none" stroke="#840000" stroke-width="1.2"/>
<line x1="932.6" y1="139.6" x2="957.8" y2="127.2" stroke="#840000" stroke-width="1.2"/>
<text x="914.0" y="140.3" fill="#a90000" font-size="16.5" text-anchor="middle" textLength="9.0" lengthAdjust="spacing">1</text>
<text x="975.0" y="140.3" fill="#a90000" font-size="16.5" text-anchor="middle" textLength="9.9" lengthAdjust="spacing">2</text>
<line x1="965.6" y1="142.3" x2="985.2" y2="142.3" stroke="#840000" stroke-width="1.2"/>
<polyline points="985.2,142.3 995.6,142.3" stroke="#009600" stroke-width="1.3" fill="none"/>
<line x1="995.6" y1="142.3" x2="995.6" y2="121.9" stroke="#840000" stroke-width="1.2"/>
<polyline points="989.2,132.4 995.6,121.9 1002.0,132.4" stroke="#840000" stroke-width="1.2" fill="none"/>
<text x="995.6" y="106.4" fill="#006464" font-size="16.5" text-anchor="middle" textLength="43.7" lengthAdjust="spacing">+3.3V</text>
<text x="945.0" y="116.9" fill="#006464" font-size="16.5" text-anchor="middle" textLength="69.6" lengthAdjust="spacing">SW_SPST</text>
<text x="945.0" y="96.9" fill="#006464" font-size="16.5" text-anchor="middle" textLength="29.9" lengthAdjust="spacing">SW1</text>
<polyline points="893.3,142.3 893.3,152.0" stroke="#009600" stroke-width="1.3" fill="none"/>
<rect x="885.1" y="152.0" width="16.4" height="41.3" stroke="#840000" stroke-width="2.2" fill="none"/>
<line x1="893.3" y1="193.3" x2="893.3" y2="203.5" stroke="#840000" stroke-width="1.2"/>
<line x1="893.3" y1="203.5" x2="893.3" y2="213.7" stroke="#840000" stroke-width="1.2"/>
<polygon points="882.9,213.7 903.7,213.7 893.3,224.1" stroke="#840000" stroke-width="1.2" fill="none"/>
<text x="893.3" y="249.9" fill="#006464" font-size="16.5" text-anchor="middle" textLength="29.7" lengthAdjust="spacing">GND</text>
<text x="916.0" y="168.6" fill="#006464" font-size="16.5" text-anchor="start" textLength="18.9" lengthAdjust="spacing">R1</text>
<text x="916.0" y="188.9" fill="#006464" font-size="16.5" text-anchor="start" textLength="28.8" lengthAdjust="spacing">10K</text>
<line x1="1108.6" y1="94.0" x2="1108.6" y2="121.0" stroke="#840000" stroke-width="1.2"/>
<polyline points="1102.4,101.4 1108.6,91.0 1114.8,101.4" stroke="#840000" stroke-width="1.2" fill="none"/>
<rect x="1100.4" y="121.0" width="16.4" height="41.3" stroke="#840000" stroke-width="2.2" fill="none"/>
<line x1="1108.6" y1="162.3" x2="1108.6" y2="172.6" stroke="#840000" stroke-width="1.2"/>
<text x="1063.0" y="123.4" fill="#006464" font-size="16.5" text-anchor="start" textLength="19.8" lengthAdjust="spacing">R2</text>
<text x="1063.0" y="143.4" fill="#006464" font-size="16.5" text-anchor="start" textLength="34.9" lengthAdjust="spacing">4.7K</text>
<polygon points="1098.3,172.7 1089.7,162.5 1040.0,162.5 1040.0,182.9 1089.7,182.9" stroke="#840000" stroke-width="1.2" fill="none"/>
<text x="1048.3" y="178.6" fill="#840000" font-size="16.5" text-anchor="start" textLength="37.4" lengthAdjust="spacing">NRST</text>
<polyline points="1098.3,172.7 1118.5,172.7" stroke="#009600" stroke-width="1.3" fill="none"/>
<circle cx="1108.6" cy="172.7" r="4.3" fill="#009600"/>
<line x1="1118.5" y1="172.7" x2="1139.2" y2="172.7" stroke="#840000" stroke-width="1.2"/>
<circle cx="1143.3" cy="172.7" r="4.1" fill="none" stroke="#840000" stroke-width="1.2"/>
<circle cx="1175.3" cy="172.7" r="4.1" fill="none" stroke="#840000" stroke-width="1.2"/>
<line x1="1139.0" y1="162.3" x2="1180.0" y2="162.3" stroke="#840000" stroke-width="1.2"/>
<line x1="1159.4" y1="148.3" x2="1159.4" y2="162.3" stroke="#840000" stroke-width="1.2"/>
<polyline points="1179.4,172.7 1200.1,172.7 1200.1,183.4" stroke="#840000" stroke-width="1.2" fill="none"/>
<polygon points="1189.7,183.4 1210.5,183.4 1200.1,193.6" stroke="#840000" stroke-width="1.2" fill="none"/>
<text x="1184.3" y="219.5" fill="#006464" font-size="16.5" text-anchor="start" textLength="29.7" lengthAdjust="spacing">GND</text>
<text x="1159.0" y="117.6" fill="#006464" font-size="16.5" text-anchor="middle" textLength="30.8" lengthAdjust="spacing">SW2</text>
<text x="1161.0" y="138.3" fill="#006464" font-size="16.5" text-anchor="middle" textLength="70.3" lengthAdjust="spacing">SW_Push</text>
<line x1="1108.6" y1="172.7" x2="1108.6" y2="197.4" stroke="#840000" stroke-width="1.2"/>
<line x1="1091.1" y1="197.4" x2="1126.1" y2="197.4" stroke="#840000" stroke-width="3.2" stroke-linecap="round"/>
<line x1="1091.1" y1="209.4" x2="1126.1" y2="209.4" stroke="#840000" stroke-width="3.2" stroke-linecap="round"/>
<line x1="1108.6" y1="209.4" x2="1108.6" y2="234.3" stroke="#840000" stroke-width="1.2"/>
<line x1="1108.6" y1="234.3" x2="1108.6" y2="244.5" stroke="#840000" stroke-width="1.2"/>
<polygon points="1098.2,244.5 1119.0,244.5 1108.6,254.9" stroke="#840000" stroke-width="1.2" fill="none"/>
<text x="1108.6" y="280.4" fill="#006464" font-size="16.5" text-anchor="middle" textLength="29.7" lengthAdjust="spacing">GND</text>
<text x="1140.6" y="198.6" fill="#006464" font-size="16.5" text-anchor="start" textLength="28.8" lengthAdjust="spacing">C10</text>
<text x="1140.6" y="219.9" fill="#006464" font-size="16.5" text-anchor="start" textLength="42.8" lengthAdjust="spacing">0.1µF</text>
<rect x="1527.6" y="60.0" width="285.6" height="501.5" stroke="#840000" stroke-width="2.4" fill="#ffffc2"/>
<polygon points="1485.6,90.5 1477.0,80.3 1363.5,80.3 1363.5,100.7 1477.0,100.7" stroke="#840000" stroke-width="1.2" fill="none"/>
<text x="1371.8" y="96.4" fill="#840000" font-size="16.5" text-anchor="start" textLength="101.2" lengthAdjust="spacing">SDMMC1_CMD</text>
<line x1="1485.6" y1="90.5" x2="1527.6" y2="90.5" stroke="#840000" stroke-width="1.2"/>
<text x="1507.0" y="87.9" fill="#a90000" font-size="16.5" text-anchor="middle" textLength="19.8" lengthAdjust="spacing">83</text>
<text class="y" x="1534.5" y="96.4" fill="#006464" font-size="16.5" text-anchor="start" textLength="29.7" lengthAdjust="spacing">PD2</text>
<path d="M1564.7,88.0 h10 M1567.7,89.3 v1.2 q0,3.3 3,3.3 h4" stroke="#006464" stroke-width="1.3" fill="none"/><path d="M1575.7,88.0 l-3,-2.2 v4.4 z M1575.7,93.8 l-3,-2.2 v4.4 z" fill="#006464"/>
<polygon points="1485.6,111.3 1477.0,101.1 1391.6,101.1 1391.6,121.5 1477.0,121.5" stroke="#840000" stroke-width="1.2" fill="none"/>
<text x="1399.9" y="117.2" fill="#840000" font-size="16.5" text-anchor="start" textLength="73.1" lengthAdjust="spacing">LCD_ENCA</text>
<line x1="1485.6" y1="111.3" x2="1527.6" y2="111.3" stroke="#840000" stroke-width="1.2"/>
<text x="1507.0" y="108.7" fill="#a90000" font-size="16.5" text-anchor="middle" textLength="19.8" lengthAdjust="spacing">84</text>
<text class="y" x="1534.5" y="117.2" fill="#006464" font-size="16.5" text-anchor="start" textLength="29.7" lengthAdjust="spacing">PD3</text>
<path d="M1564.7,108.8 h10 M1567.7,110.1 v1.2 q0,3.3 3,3.3 h4" stroke="#006464" stroke-width="1.3" fill="none"/><path d="M1575.7,108.8 l-3,-2.2 v4.4 z M1575.7,114.6 l-3,-2.2 v4.4 z" fill="#006464"/>
<polygon points="1485.6,131.6 1477.0,121.4 1389.5,121.4 1389.5,141.8 1477.0,141.8" stroke="#840000" stroke-width="1.2" fill="none"/>
<text x="1397.8" y="137.5" fill="#840000" font-size="16.5" text-anchor="start" textLength="75.2" lengthAdjust="spacing">LCD_ENCB</text>
<line x1="1485.6" y1="131.6" x2="1527.6" y2="131.6" stroke="#840000" stroke-width="1.2"/>
<text x="1507.0" y="129.0" fill="#a90000" font-size="16.5" text-anchor="middle" textLength="19.8" lengthAdjust="spacing">85</text>
<text class="y" x="1534.5" y="137.5" fill="#006464" font-size="16.5" text-anchor="start" textLength="29.7" lengthAdjust="spacing">PD4</text>
<path d="M1564.7,129.1 h10 M1567.7,130.4 v1.2 q0,3.3 3,3.3 h4" stroke="#006464" stroke-width="1.3" fill="none"/><path d="M1575.7,129.1 l-3,-2.2 v4.4 z M1575.7,134.9 l-3,-2.2 v4.4 z" fill="#006464"/>
<polygon points="1485.6,152.0 1477.0,141.8 1417.6,141.8 1417.6,162.2 1477.0,162.2" stroke="#840000" stroke-width="1.2" fill="none"/>
<text x="1425.9" y="157.9" fill="#840000" font-size="16.5" text-anchor="start" textLength="47.1" lengthAdjust="spacing">TFT_TX</text>
<line x1="1485.6" y1="152.0" x2="1527.6" y2="152.0" stroke="#840000" stroke-width="1.2"/>
<text x="1507.0" y="149.4" fill="#a90000" font-size="16.5" text-anchor="middle" textLength="19.8" lengthAdjust="spacing">86</text>
<text class="y" x="1534.5" y="157.9" fill="#006464" font-size="16.5" text-anchor="start" textLength="29.7" lengthAdjust="spacing">PD5</text>
<path d="M1564.7,149.5 h10 M1567.7,150.8 v1.2 q0,3.3 3,3.3 h4" stroke="#006464" stroke-width="1.3" fill="none"/><path d="M1575.7,149.5 l-3,-2.2 v4.4 z M1575.7,155.3 l-3,-2.2 v4.4 z" fill="#006464"/>
<polygon points="1485.6,172.4 1477.0,162.2 1414.5,162.2 1414.5,182.6 1477.0,182.6" stroke="#840000" stroke-width="1.2" fill="none"/>
<text x="1422.8" y="178.3" fill="#840000" font-size="16.5" text-anchor="start" textLength="50.2" lengthAdjust="spacing">TFT_RX</text>
<line x1="1485.6" y1="172.4" x2="1527.6" y2="172.4" stroke="#840000" stroke-width="1.2"/>
<text x="1507.0" y="169.8" fill="#a90000" font-size="16.5" text-anchor="middle" textLength="19.8" lengthAdjust="spacing">87</text>
<text class="y" x="1534.5" y="178.3" fill="#006464" font-size="16.5" text-anchor="start" textLength="29.7" lengthAdjust="spacing">PD6</text>
<path d="M1564.7,169.9 h10 M1567.7,171.2 v1.2 q0,3.3 3,3.3 h4" stroke="#006464" stroke-width="1.3" fill="none"/><path d="M1575.7,169.9 l-3,-2.2 v4.4 z M1575.7,175.7 l-3,-2.2 v4.4 z" fill="#006464"/>
<polygon points="1485.6,192.8 1477.0,182.6 1391.6,182.6 1391.6,203.0 1477.0,203.0" stroke="#840000" stroke-width="1.2" fill="none"/>
<text x="1399.9" y="198.7" fill="#840000" font-size="16.5" text-anchor="start" textLength="73.1" lengthAdjust="spacing">LCD_BEEP</text>
<line x1="1485.6" y1="192.8" x2="1527.6" y2="192.8" stroke="#840000" stroke-width="1.2"/>
<text x="1507.0" y="190.2" fill="#a90000" font-size="16.5" text-anchor="middle" textLength="19.8" lengthAdjust="spacing">88</text>
<text class="y" x="1534.5" y="198.7" fill="#006464" font-size="16.5" text-anchor="start" textLength="29.7" lengthAdjust="spacing">PD7</text>
<path d="M1564.7,190.3 h10 M1567.7,191.6 v1.2 q0,3.3 3,3.3 h4" stroke="#006464" stroke-width="1.3" fill="none"/><path d="M1575.7,190.3 l-3,-2.2 v4.4 z M1575.7,196.1 l-3,-2.2 v4.4 z" fill="#006464"/>
<polygon points="1485.6,213.2 1477.0,203.0 1401.6,203.0 1401.6,223.4 1477.0,223.4" stroke="#840000" stroke-width="1.2" fill="none"/>
<text x="1409.9" y="219.1" fill="#840000" font-size="16.5" text-anchor="start" textLength="63.1" lengthAdjust="spacing">LCD_BTN</text>
<line x1="1485.6" y1="213.2" x2="1527.6" y2="213.2" stroke="#840000" stroke-width="1.2"/>
<text x="1507.0" y="210.6" fill="#a90000" font-size="16.5" text-anchor="middle" textLength="19.8" lengthAdjust="spacing">55</text>
<text class="y" x="1534.5" y="219.1" fill="#006464" font-size="16.5" text-anchor="start" textLength="29.7" lengthAdjust="spacing">PD8</text>
<path d="M1564.7,210.7 h10 M1567.7,212.0 v1.2 q0,3.3 3,3.3 h4" stroke="#006464" stroke-width="1.3" fill="none"/><path d="M1575.7,210.7 l-3,-2.2 v4.4 z M1575.7,216.5 l-3,-2.2 v4.4 z" fill="#006464"/>
<polygon points="1485.6,233.6 1477.0,223.4 1410.7,223.4 1410.7,243.8 1477.0,243.8" stroke="#840000" stroke-width="1.2" fill="none"/>
<text x="1419.0" y="239.5" fill="#840000" font-size="16.5" text-anchor="start" textLength="54.0" lengthAdjust="spacing">LCD_EN</text>
<line x1="1485.6" y1="233.6" x2="1527.6" y2="233.6" stroke="#840000" stroke-width="1.2"/>
<text x="1507.0" y="231.0" fill="#a90000" font-size="16.5" text-anchor="middle" textLength="19.8" lengthAdjust="spacing">56</text>
<text class="y" x="1534.5" y="239.5" fill="#006464" font-size="16.5" text-anchor="start" textLength="29.7" lengthAdjust="spacing">PD9</text>
<path d="M1564.7,231.1 h10 M1567.7,232.4 v1.2 q0,3.3 3,3.3 h4" stroke="#006464" stroke-width="1.3" fill="none"/><path d="M1575.7,231.1 l-3,-2.2 v4.4 z M1575.7,236.9 l-3,-2.2 v4.4 z" fill="#006464"/>
<polygon points="1485.6,254.0 1477.0,243.8 1410.7,243.8 1410.7,264.2 1477.0,264.2" stroke="#840000" stroke-width="1.2" fill="none"/>
<text x="1419.0" y="259.9" fill="#840000" font-size="16.5" text-anchor="start" textLength="54.0" lengthAdjust="spacing">LCD_CS</text>
<line x1="1485.6" y1="254.0" x2="1527.6" y2="254.0" stroke="#840000" stroke-width="1.2"/>
<text x="1507.0" y="251.4" fill="#a90000" font-size="16.5" text-anchor="middle" textLength="19.8" lengthAdjust="spacing">57</text>
<text class="y" x="1534.5" y="259.9" fill="#006464" font-size="16.5" text-anchor="start" textLength="38.7" lengthAdjust="spacing">PD10</text>
<path d="M1573.7,251.5 h10 M1576.7,252.8 v1.2 q0,3.3 3,3.3 h4" stroke="#006464" stroke-width="1.3" fill="none"/><path d="M1584.7,251.5 l-3,-2.2 v4.4 z M1584.7,257.3 l-3,-2.2 v4.4 z" fill="#006464"/>
<polygon points="1485.6,274.4 1477.0,264.2 1410.7,264.2 1410.7,284.6 1477.0,284.6" stroke="#840000" stroke-width="1.2" fill="none"/>
<text x="1419.0" y="280.3" fill="#840000" font-size="16.5" text-anchor="start" textLength="54.0" lengthAdjust="spacing">LCD_D4</text>
<line x1="1485.6" y1="274.4" x2="1527.6" y2="274.4" stroke="#840000" stroke-width="1.2"/>
<text x="1507.0" y="271.8" fill="#a90000" font-size="16.5" text-anchor="middle" textLength="19.8" lengthAdjust="spacing">58</text>
<text class="y" x="1534.5" y="280.3" fill="#006464" font-size="16.5" text-anchor="start" textLength="37.8" lengthAdjust="spacing">PD11</text>
<path d="M1572.8,271.9 h10 M1575.8,273.2 v1.2 q0,3.3 3,3.3 h4" stroke="#006464" stroke-width="1.3" fill="none"/><path d="M1583.8,271.9 l-3,-2.2 v4.4 z M1583.8,277.7 l-3,-2.2 v4.4 z" fill="#006464"/>
<polygon points="1485.6,294.8 1477.0,284.6 1410.7,284.6 1410.7,305.0 1477.0,305.0" stroke="#840000" stroke-width="1.2" fill="none"/>
<text x="1419.0" y="300.7" fill="#840000" font-size="16.5" text-anchor="start" textLength="54.0" lengthAdjust="spacing">LCD_D5</text>
<line x1="1485.6" y1="294.8" x2="1527.6" y2="294.8" stroke="#840000" stroke-width="1.2"/>
<text x="1507.0" y="292.2" fill="#a90000" font-size="16.5" text-anchor="middle" textLength="19.8" lengthAdjust="spacing">59</text>
<text class="y" x="1534.5" y="300.7" fill="#006464" font-size="16.5" text-anchor="start" textLength="38.7" lengthAdjust="spacing">PD12</text>
<path d="M1573.7,292.3 h10 M1576.7,293.6 v1.2 q0,3.3 3,3.3 h4" stroke="#006464" stroke-width="1.3" fill="none"/><path d="M1584.7,292.3 l-3,-2.2 v4.4 z M1584.7,298.1 l-3,-2.2 v4.4 z" fill="#006464"/>
<polygon points="1485.6,315.2 1477.0,305.0 1410.7,305.0 1410.7,325.4 1477.0,325.4" stroke="#840000" stroke-width="1.2" fill="none"/>
<text x="1419.0" y="321.1" fill="#840000" font-size="16.5" text-anchor="start" textLength="54.0" lengthAdjust="spacing">LCD_D6</text>
<line x1="1485.6" y1="315.2" x2="1527.6" y2="315.2" stroke="#840000" stroke-width="1.2"/>
<text x="1507.0" y="312.6" fill="#a90000" font-size="16.5" text-anchor="middle" textLength="19.8" lengthAdjust="spacing">60</text>
<text class="y" x="1534.5" y="321.1" fill="#006464" font-size="16.5" text-anchor="start" textLength="38.7" lengthAdjust="spacing">PD13</text>
<path d="M1573.7,312.7 h10 M1576.7,314.0 v1.2 q0,3.3 3,3.3 h4" stroke="#006464" stroke-width="1.3" fill="none"/><path d="M1584.7,312.7 l-3,-2.2 v4.4 z M1584.7,318.5 l-3,-2.2 v4.4 z" fill="#006464"/>
<polygon points="1485.6,335.6 1477.0,325.4 1410.7,325.4 1410.7,345.8 1477.0,345.8" stroke="#840000" stroke-width="1.2" fill="none"/>
<text x="1419.0" y="341.5" fill="#840000" font-size="16.5" text-anchor="start" textLength="54.0" lengthAdjust="spacing">LCD_D7</text>
<line x1="1485.6" y1="335.6" x2="1527.6" y2="335.6" stroke="#840000" stroke-width="1.2"/>
<text x="1507.0" y="333.0" fill="#a90000" font-size="16.5" text-anchor="middle" textLength="18.9" lengthAdjust="spacing">61</text>
<text class="y" x="1534.5" y="341.5" fill="#006464" font-size="16.5" text-anchor="start" textLength="38.7" lengthAdjust="spacing">PD14</text>
<path d="M1573.7,333.1 h10 M1576.7,334.4 v1.2 q0,3.3 3,3.3 h4" stroke="#006464" stroke-width="1.3" fill="none"/><path d="M1584.7,333.1 l-3,-2.2 v4.4 z M1584.7,338.9 l-3,-2.2 v4.4 z" fill="#006464"/>
<polygon points="1485.6,356.0 1477.0,345.8 1411.3,345.8 1411.3,366.2 1477.0,366.2" stroke="#840000" stroke-width="1.2" fill="none"/>
<text x="1419.6" y="361.9" fill="#840000" font-size="16.5" text-anchor="start" textLength="53.4" lengthAdjust="spacing">SD_DET</text>
<line x1="1485.6" y1="356.0" x2="1527.6" y2="356.0" stroke="#840000" stroke-width="1.2"/>
<text x="1507.0" y="353.4" fill="#a90000" font-size="16.5" text-anchor="middle" textLength="19.8" lengthAdjust="spacing">62</text>
<text class="y" x="1534.5" y="361.9" fill="#006464" font-size="16.5" text-anchor="start" textLength="38.7" lengthAdjust="spacing">PD15</text>
<path d="M1573.7,353.5 h10 M1576.7,354.8 v1.2 q0,3.3 3,3.3 h4" stroke="#006464" stroke-width="1.3" fill="none"/><path d="M1584.7,353.5 l-3,-2.2 v4.4 z M1584.7,359.3 l-3,-2.2 v4.4 z" fill="#006464"/>
<line x1="1813.2" y1="90.5" x2="1854.7" y2="90.5" stroke="#840000" stroke-width="1.2"/>
<text x="1834.0" y="87.9" fill="#a90000" font-size="16.5" text-anchor="middle" textLength="19.8" lengthAdjust="spacing">50</text>
<text class="y" x="1806.0" y="96.4" fill="#006464" font-size="16.5" text-anchor="end" textLength="37.8" lengthAdjust="spacing">PB11</text>
<path d="M1755.7,88.0 h10 M1758.7,89.3 v1.2 q0,3.3 3,3.3 h4" stroke="#006464" stroke-width="1.3" fill="none"/><path d="M1766.7,88.0 l-3,-2.2 v4.4 z M1766.7,93.8 l-3,-2.2 v4.4 z" fill="#006464"/>
<circle cx="1854.7" cy="90.5" r="2.5" fill="none" stroke="#840000" stroke-width="1"/>
<line x1="1813.2" y1="111.3" x2="1854.7" y2="111.3" stroke="#840000" stroke-width="1.2"/>
<text x="1834.0" y="108.7" fill="#a90000" font-size="16.5" text-anchor="middle" textLength="18.9" lengthAdjust="spacing">51</text>
<text class="y" x="1806.0" y="117.2" fill="#006464" font-size="16.5" text-anchor="end" textLength="38.7" lengthAdjust="spacing">PB12</text>
<path d="M1754.8,108.8 h10 M1757.8,110.1 v1.2 q0,3.3 3,3.3 h4" stroke="#006464" stroke-width="1.3" fill="none"/><path d="M1765.8,108.8 l-3,-2.2 v4.4 z M1765.8,114.6 l-3,-2.2 v4.4 z" fill="#006464"/>
<circle cx="1854.7" cy="111.3" r="2.5" fill="none" stroke="#840000" stroke-width="1"/>
<line x1="1813.2" y1="131.6" x2="1854.7" y2="131.6" stroke="#840000" stroke-width="1.2"/>
<text x="1834.0" y="129.0" fill="#a90000" font-size="16.5" text-anchor="middle" textLength="19.8" lengthAdjust="spacing">52</text>
<text class="y" x="1806.0" y="137.5" fill="#006464" font-size="16.5" text-anchor="end" textLength="38.7" lengthAdjust="spacing">PB13</text>
<path d="M1754.8,129.1 h10 M1757.8,130.4 v1.2 q0,3.3 3,3.3 h4" stroke="#006464" stroke-width="1.3" fill="none"/><path d="M1765.8,129.1 l-3,-2.2 v4.4 z M1765.8,134.9 l-3,-2.2 v4.4 z" fill="#006464"/>
<circle cx="1854.7" cy="131.6" r="2.5" fill="none" stroke="#840000" stroke-width="1"/>
<line x1="1813.2" y1="152.0" x2="1854.7" y2="152.0" stroke="#840000" stroke-width="1.2"/>
<text x="1834.0" y="149.4" fill="#a90000" font-size="16.5" text-anchor="middle" textLength="19.8" lengthAdjust="spacing">53</text>
<text class="y" x="1806.0" y="157.9" fill="#006464" font-size="16.5" text-anchor="end" textLength="38.7" lengthAdjust="spacing">PB14</text>
<path d="M1754.8,149.5 h10 M1757.8,150.8 v1.2 q0,3.3 3,3.3 h4" stroke="#006464" stroke-width="1.3" fill="none"/><path d="M1765.8,149.5 l-3,-2.2 v4.4 z M1765.8,155.3 l-3,-2.2 v4.4 z" fill="#006464"/>
<circle cx="1854.7" cy="152.0" r="2.5" fill="none" stroke="#840000" stroke-width="1"/>
<line x1="1813.2" y1="172.2" x2="1854.7" y2="172.2" stroke="#840000" stroke-width="1.2"/>
<text x="1834.0" y="169.6" fill="#a90000" font-size="16.5" text-anchor="middle" textLength="19.8" lengthAdjust="spacing">54</text>
<text class="y" x="1806.0" y="178.1" fill="#006464" font-size="16.5" text-anchor="end" textLength="38.7" lengthAdjust="spacing">PB15</text>
<path d="M1754.8,169.7 h10 M1757.8,171.0 v1.2 q0,3.3 3,3.3 h4" stroke="#006464" stroke-width="1.3" fill="none"/><path d="M1765.8,169.7 l-3,-2.2 v4.4 z M1765.8,175.5 l-3,-2.2 v4.4 z" fill="#006464"/>
<circle cx="1854.7" cy="172.2" r="2.5" fill="none" stroke="#840000" stroke-width="1"/>
<line x1="1813.2" y1="213.2" x2="1854.7" y2="213.2" stroke="#840000" stroke-width="1.2"/>
<text x="1834.0" y="210.6" fill="#a90000" font-size="16.5" text-anchor="middle" textLength="18.9" lengthAdjust="spacing">15</text>
<text class="y" x="1806.0" y="219.1" fill="#006464" font-size="16.5" text-anchor="end" textLength="29.7" lengthAdjust="spacing">PC0</text>
<path d="M1763.8,210.7 h10 M1766.8,212.0 v1.2 q0,3.3 3,3.3 h4" stroke="#006464" stroke-width="1.3" fill="none"/><path d="M1774.8,210.7 l-3,-2.2 v4.4 z M1774.8,216.5 l-3,-2.2 v4.4 z" fill="#006464"/>
<polygon points="1854.7,213.2 1863.3,203.0 1944.5,203.0 1944.5,223.4 1863.3,223.4" stroke="#840000" stroke-width="1.2" fill="none"/>
<text x="1867.3" y="219.1" fill="#840000" font-size="16.5" text-anchor="start" textLength="69.2" lengthAdjust="spacing">THERMO1</text>
<line x1="1813.2" y1="234.2" x2="1854.7" y2="234.2" stroke="#840000" stroke-width="1.2"/>
<text x="1834.0" y="231.6" fill="#a90000" font-size="16.5" text-anchor="middle" textLength="18.9" lengthAdjust="spacing">16</text>
<text class="y" x="1806.0" y="240.1" fill="#006464" font-size="16.5" text-anchor="end" textLength="28.8" lengthAdjust="spacing">PC1</text>
<path d="M1764.7,231.7 h10 M1767.7,233.0 v1.2 q0,3.3 3,3.3 h4" stroke="#006464" stroke-width="1.3" fill="none"/><path d="M1775.7,231.7 l-3,-2.2 v4.4 z M1775.7,237.5 l-3,-2.2 v4.4 z" fill="#006464"/>
<polygon points="1854.7,234.2 1863.3,224.0 1944.5,224.0 1944.5,244.4 1863.3,244.4" stroke="#840000" stroke-width="1.2" fill="none"/>
<text x="1867.3" y="240.1" fill="#840000" font-size="16.5" text-anchor="start" textLength="69.2" lengthAdjust="spacing">THERMO2</text>
<line x1="1813.2" y1="254.4" x2="1854.7" y2="254.4" stroke="#840000" stroke-width="1.2"/>
<text x="1834.0" y="251.8" fill="#a90000" font-size="16.5" text-anchor="middle" textLength="18.9" lengthAdjust="spacing">17</text>
<text class="y" x="1806.0" y="260.3" fill="#006464" font-size="16.5" text-anchor="end" textLength="49.4" lengthAdjust="spacing">PC2_C</text>
<path d="M1744.1,251.9 h10 M1747.1,253.2 v1.2 q0,3.3 3,3.3 h4" stroke="#006464" stroke-width="1.3" fill="none"/><path d="M1755.1,251.9 l-3,-2.2 v4.4 z M1755.1,257.7 l-3,-2.2 v4.4 z" fill="#006464"/>
<polygon points="1854.7,254.4 1863.3,244.2 1944.5,244.2 1944.5,264.6 1863.3,264.6" stroke="#840000" stroke-width="1.2" fill="none"/>
<text x="1867.3" y="260.3" fill="#840000" font-size="16.5" text-anchor="start" textLength="69.2" lengthAdjust="spacing">THERMO3</text>
<line x1="1813.2" y1="274.3" x2="1854.7" y2="274.3" stroke="#840000" stroke-width="1.2"/>
<text x="1834.0" y="271.7" fill="#a90000" font-size="16.5" text-anchor="middle" textLength="18.9" lengthAdjust="spacing">18</text>
<text class="y" x="1806.0" y="280.2" fill="#006464" font-size="16.5" text-anchor="end" textLength="49.4" lengthAdjust="spacing">PC3_C</text>
<path d="M1744.1,271.8 h10 M1747.1,273.1 v1.2 q0,3.3 3,3.3 h4" stroke="#006464" stroke-width="1.3" fill="none"/><path d="M1755.1,271.8 l-3,-2.2 v4.4 z M1755.1,277.6 l-3,-2.2 v4.4 z" fill="#006464"/>
<polygon points="1854.7,274.3 1863.3,264.1 1959.3,264.1 1959.3,284.5 1863.3,284.5" stroke="#840000" stroke-width="1.2" fill="none"/>
<text x="1867.3" y="280.2" fill="#840000" font-size="16.5" text-anchor="start" textLength="84.0" lengthAdjust="spacing">DRIVEY_DIR</text>
<line x1="1813.2" y1="295.3" x2="1854.7" y2="295.3" stroke="#840000" stroke-width="1.2"/>
<text x="1834.0" y="292.7" fill="#a90000" font-size="16.5" text-anchor="middle" textLength="19.8" lengthAdjust="spacing">32</text>
<text class="y" x="1806.0" y="301.2" fill="#006464" font-size="16.5" text-anchor="end" textLength="29.7" lengthAdjust="spacing">PC4</text>
<path d="M1763.8,292.8 h10 M1766.8,294.1 v1.2 q0,3.3 3,3.3 h4" stroke="#006464" stroke-width="1.3" fill="none"/><path d="M1774.8,292.8 l-3,-2.2 v4.4 z M1774.8,298.6 l-3,-2.2 v4.4 z" fill="#006464"/>
<polygon points="1854.7,295.3 1863.3,285.1 1970.5,285.1 1970.5,305.5 1863.3,305.5" stroke="#840000" stroke-width="1.2" fill="none"/>
<text x="1867.3" y="301.2" fill="#840000" font-size="16.5" text-anchor="start" textLength="95.2" lengthAdjust="spacing">DRIVEY_STEP</text>
<line x1="1813.2" y1="315.3" x2="1854.7" y2="315.3" stroke="#840000" stroke-width="1.2"/>
<text x="1834.0" y="312.7" fill="#a90000" font-size="16.5" text-anchor="middle" textLength="19.8" lengthAdjust="spacing">33</text>
<text class="y" x="1806.0" y="321.2" fill="#006464" font-size="16.5" text-anchor="end" textLength="29.7" lengthAdjust="spacing">PC5</text>
<path d="M1763.8,312.8 h10 M1766.8,314.1 v1.2 q0,3.3 3,3.3 h4" stroke="#006464" stroke-width="1.3" fill="none"/><path d="M1774.8,312.8 l-3,-2.2 v4.4 z M1774.8,318.6 l-3,-2.2 v4.4 z" fill="#006464"/>
<polygon points="1854.7,315.3 1863.3,305.1 1953.4,305.1 1953.4,325.5 1863.3,325.5" stroke="#840000" stroke-width="1.2" fill="none"/>
<text x="1867.3" y="321.2" fill="#840000" font-size="16.5" text-anchor="start" textLength="78.1" lengthAdjust="spacing">DRIVEY_CS</text>
<line x1="1813.2" y1="336.1" x2="1854.7" y2="336.1" stroke="#840000" stroke-width="1.2"/>
<text x="1834.0" y="333.5" fill="#a90000" font-size="16.5" text-anchor="middle" textLength="19.8" lengthAdjust="spacing">63</text>
<text class="y" x="1806.0" y="342.0" fill="#006464" font-size="16.5" text-anchor="end" textLength="29.7" lengthAdjust="spacing">PC6</text>
<path d="M1763.8,333.6 h10 M1766.8,334.9 v1.2 q0,3.3 3,3.3 h4" stroke="#006464" stroke-width="1.3" fill="none"/><path d="M1774.8,333.6 l-3,-2.2 v4.4 z M1774.8,339.4 l-3,-2.2 v4.4 z" fill="#006464"/>
<polygon points="1854.7,336.1 1863.3,325.9 1953.4,325.9 1953.4,346.3 1863.3,346.3" stroke="#840000" stroke-width="1.2" fill="none"/>
<text x="1867.3" y="342.0" fill="#840000" font-size="16.5" text-anchor="start" textLength="78.1" lengthAdjust="spacing">DRIVEY_EN</text>
<line x1="1813.2" y1="356.2" x2="1854.7" y2="356.2" stroke="#840000" stroke-width="1.2"/>
<text x="1834.0" y="353.6" fill="#a90000" font-size="16.5" text-anchor="middle" textLength="19.8" lengthAdjust="spacing">64</text>
<text class="y" x="1806.0" y="362.1" fill="#006464" font-size="16.5" text-anchor="end" textLength="29.7" lengthAdjust="spacing">PC7</text>
<path d="M1763.8,353.7 h10 M1766.8,355.0 v1.2 q0,3.3 3,3.3 h4" stroke="#006464" stroke-width="1.3" fill="none"/><path d="M1774.8,353.7 l-3,-2.2 v4.4 z M1774.8,359.5 l-3,-2.2 v4.4 z" fill="#006464"/>
<circle cx="1854.7" cy="356.2" r="2.5" fill="none" stroke="#840000" stroke-width="1"/>
<line x1="1813.2" y1="377.2" x2="1854.7" y2="377.2" stroke="#840000" stroke-width="1.2"/>
<text x="1834.0" y="374.6" fill="#a90000" font-size="16.5" text-anchor="middle" textLength="19.8" lengthAdjust="spacing">65</text>
<text class="y" x="1806.0" y="383.1" fill="#006464" font-size="16.5" text-anchor="end" textLength="29.7" lengthAdjust="spacing">PC8</text>
<path d="M1763.8,374.7 h10 M1766.8,376.0 v1.2 q0,3.3 3,3.3 h4" stroke="#006464" stroke-width="1.3" fill="none"/><path d="M1774.8,374.7 l-3,-2.2 v4.4 z M1774.8,380.5 l-3,-2.2 v4.4 z" fill="#006464"/>
<polygon points="1854.7,377.2 1863.3,367.0 1965.5,367.0 1965.5,387.4 1863.3,387.4" stroke="#840000" stroke-width="1.2" fill="none"/>
<text x="1867.3" y="383.1" fill="#840000" font-size="16.5" text-anchor="start" textLength="90.2" lengthAdjust="spacing">SDMMC1_D0</text>
<line x1="1813.2" y1="397.4" x2="1854.7" y2="397.4" stroke="#840000" stroke-width="1.2"/>
<text x="1834.0" y="394.8" fill="#a90000" font-size="16.5" text-anchor="middle" textLength="19.8" lengthAdjust="spacing">66</text>
<text class="y" x="1806.0" y="403.3" fill="#006464" font-size="16.5" text-anchor="end" textLength="29.7" lengthAdjust="spacing">PC9</text>
<path d="M1763.8,394.9 h10 M1766.8,396.2 v1.2 q0,3.3 3,3.3 h4" stroke="#006464" stroke-width="1.3" fill="none"/><path d="M1774.8,394.9 l-3,-2.2 v4.4 z M1774.8,400.7 l-3,-2.2 v4.4 z" fill="#006464"/>
<polygon points="1854.7,397.4 1863.3,387.2 1965.5,387.2 1965.5,407.6 1863.3,407.6" stroke="#840000" stroke-width="1.2" fill="none"/>
<text x="1867.3" y="403.3" fill="#840000" font-size="16.5" text-anchor="start" textLength="90.2" lengthAdjust="spacing">SDMMC1_D1</text>
<line x1="1813.2" y1="418.1" x2="1854.7" y2="418.1" stroke="#840000" stroke-width="1.2"/>
<text x="1834.0" y="415.5" fill="#a90000" font-size="16.5" text-anchor="middle" textLength="19.8" lengthAdjust="spacing">78</text>
<text class="y" x="1806.0" y="424.0" fill="#006464" font-size="16.5" text-anchor="end" textLength="38.7" lengthAdjust="spacing">PC10</text>
<path d="M1754.8,415.6 h10 M1757.8,416.9 v1.2 q0,3.3 3,3.3 h4" stroke="#006464" stroke-width="1.3" fill="none"/><path d="M1765.8,415.6 l-3,-2.2 v4.4 z M1765.8,421.4 l-3,-2.2 v4.4 z" fill="#006464"/>
<polygon points="1854.7,418.1 1863.3,407.9 1965.5,407.9 1965.5,428.3 1863.3,428.3" stroke="#840000" stroke-width="1.2" fill="none"/>
<text x="1867.3" y="424.0" fill="#840000" font-size="16.5" text-anchor="start" textLength="90.2" lengthAdjust="spacing">SDMMC1_D2</text>
<line x1="1813.2" y1="438.4" x2="1854.7" y2="438.4" stroke="#840000" stroke-width="1.2"/>
<text x="1834.0" y="435.8" fill="#a90000" font-size="16.5" text-anchor="middle" textLength="19.8" lengthAdjust="spacing">79</text>
<text class="y" x="1806.0" y="444.3" fill="#006464" font-size="16.5" text-anchor="end" textLength="37.8" lengthAdjust="spacing">PC11</text>
<path d="M1755.7,435.9 h10 M1758.7,437.2 v1.2 q0,3.3 3,3.3 h4" stroke="#006464" stroke-width="1.3" fill="none"/><path d="M1766.7,435.9 l-3,-2.2 v4.4 z M1766.7,441.7 l-3,-2.2 v4.4 z" fill="#006464"/>
<polygon points="1854.7,438.4 1863.3,428.2 1965.5,428.2 1965.5,448.6 1863.3,448.6" stroke="#840000" stroke-width="1.2" fill="none"/>
<text x="1867.3" y="444.3" fill="#840000" font-size="16.5" text-anchor="start" textLength="90.2" lengthAdjust="spacing">SDMMC1_D3</text>
<line x1="1813.2" y1="458.6" x2="1854.7" y2="458.6" stroke="#840000" stroke-width="1.2"/>
<text x="1834.0" y="456.0" fill="#a90000" font-size="16.5" text-anchor="middle" textLength="19.8" lengthAdjust="spacing">80</text>
<text class="y" x="1806.0" y="464.5" fill="#006464" font-size="16.5" text-anchor="end" textLength="38.7" lengthAdjust="spacing">PC12</text>
<path d="M1754.8,456.1 h10 M1757.8,457.4 v1.2 q0,3.3 3,3.3 h4" stroke="#006464" stroke-width="1.3" fill="none"/><path d="M1765.8,456.1 l-3,-2.2 v4.4 z M1765.8,461.9 l-3,-2.2 v4.4 z" fill="#006464"/>
<polygon points="1854.7,458.6 1863.3,448.4 1965.5,448.4 1965.5,468.8 1863.3,468.8" stroke="#840000" stroke-width="1.2" fill="none"/>
<text x="1867.3" y="464.5" fill="#840000" font-size="16.5" text-anchor="start" textLength="90.2" lengthAdjust="spacing">SDMMC1_CK</text>
<line x1="1813.2" y1="478.8" x2="1854.7" y2="478.8" stroke="#840000" stroke-width="1.2"/>
<text x="1834.0" y="476.2" fill="#a90000" font-size="16.5" text-anchor="middle" textLength="9.9" lengthAdjust="spacing">7</text>
<text class="y" x="1806.0" y="484.7" fill="#006464" font-size="16.5" text-anchor="end" textLength="38.7" lengthAdjust="spacing">PC13</text>
<path d="M1754.8,476.3 h10 M1757.8,477.6 v1.2 q0,3.3 3,3.3 h4" stroke="#006464" stroke-width="1.3" fill="none"/><path d="M1765.8,476.3 l-3,-2.2 v4.4 z M1765.8,482.1 l-3,-2.2 v4.4 z" fill="#006464"/>
<circle cx="1854.7" cy="478.8" r="2.5" fill="none" stroke="#840000" stroke-width="1"/>
<line x1="1813.2" y1="499.0" x2="1854.7" y2="499.0" stroke="#840000" stroke-width="1.2"/>
<text x="1834.0" y="496.4" fill="#a90000" font-size="16.5" text-anchor="middle" textLength="9.9" lengthAdjust="spacing">8</text>
<text class="y" x="1806.0" y="504.9" fill="#006464" font-size="16.5" text-anchor="end" textLength="38.7" lengthAdjust="spacing">PC14</text>
<path d="M1754.8,496.5 h10 M1757.8,497.8 v1.2 q0,3.3 3,3.3 h4" stroke="#006464" stroke-width="1.3" fill="none"/><path d="M1765.8,496.5 l-3,-2.2 v4.4 z M1765.8,502.3 l-3,-2.2 v4.4 z" fill="#006464"/>
<circle cx="1854.7" cy="499.0" r="2.5" fill="none" stroke="#840000" stroke-width="1"/>
<line x1="1813.2" y1="519.8" x2="1854.7" y2="519.8" stroke="#840000" stroke-width="1.2"/>
<text x="1834.0" y="517.2" fill="#a90000" font-size="16.5" text-anchor="middle" textLength="9.9" lengthAdjust="spacing">9</text>
<text class="y" x="1806.0" y="525.7" fill="#006464" font-size="16.5" text-anchor="end" textLength="38.7" lengthAdjust="spacing">PC15</text>
<path d="M1754.8,517.3 h10 M1757.8,518.6 v1.2 q0,3.3 3,3.3 h4" stroke="#006464" stroke-width="1.3" fill="none"/><path d="M1765.8,517.3 l-3,-2.2 v4.4 z M1765.8,523.1 l-3,-2.2 v4.4 z" fill="#006464"/>
<circle cx="1854.7" cy="519.8" r="2.5" fill="none" stroke="#840000" stroke-width="1"/>
<text class="y" x="1534.5" y="403.3" fill="#006464" font-size="16.5" text-anchor="start" textLength="39.6" lengthAdjust="spacing">VCAP</text>
<text x="1507.0" y="394.8" fill="#a90000" font-size="16.5" text-anchor="middle" textLength="19.8" lengthAdjust="spacing">48</text>
<text class="y" x="1534.5" y="424.0" fill="#006464" font-size="16.5" text-anchor="start" textLength="39.6" lengthAdjust="spacing">VCAP</text>
<text x="1507.0" y="415.5" fill="#a90000" font-size="16.5" text-anchor="middle" textLength="19.8" lengthAdjust="spacing">73</text>
<line x1="1486.4" y1="418.1" x2="1527.6" y2="418.1" stroke="#840000" stroke-width="1.2"/>
<line x1="1463.7" y1="397.4" x2="1527.6" y2="397.4" stroke="#840000" stroke-width="1.2"/>
<line x1="1449.2" y1="380.4" x2="1449.2" y2="414.4" stroke="#840000" stroke-width="3.2" stroke-linecap="round"/>
<line x1="1461.1" y1="380.4" x2="1461.1" y2="414.4" stroke="#840000" stroke-width="3.2" stroke-linecap="round"/>
<line x1="1449.2" y1="420.9" x2="1449.2" y2="455.9" stroke="#840000" stroke-width="3.2" stroke-linecap="round"/>
<line x1="1461.1" y1="420.9" x2="1461.1" y2="455.9" stroke="#840000" stroke-width="3.2" stroke-linecap="round"/>
<line x1="1425.7" y1="397.4" x2="1449.2" y2="397.4" stroke="#840000" stroke-width="1.2"/>
<line x1="1425.7" y1="438.4" x2="1449.2" y2="438.4" stroke="#840000" stroke-width="1.2"/>
<line x1="1461.1" y1="438.4" x2="1486.4" y2="438.4" stroke="#840000" stroke-width="1.2"/>
<polyline points="1425.7,397.4 1425.7,448.5" stroke="#009600" stroke-width="1.3" fill="none"/>
<polyline points="1486.4,438.4 1486.4,418.1" stroke="#009600" stroke-width="1.3" fill="none"/>
<circle cx="1425.7" cy="438.4" r="4.3" fill="#009600"/>
<line x1="1425.7" y1="448.5" x2="1425.7" y2="458.1" stroke="#840000" stroke-width="1.2"/>
<polygon points="1415.0,458.1 1436.4,458.1 1425.7,469.2" stroke="#840000" stroke-width="1.2" fill="none"/>
<text x="1394.0" y="469.0" fill="#006464" font-size="16.5" text-anchor="middle" textLength="29.7" lengthAdjust="spacing">GND</text>
<text x="1398.5" y="389.2" fill="#006464" font-size="16.5" text-anchor="middle" textLength="18.9" lengthAdjust="spacing">C1</text>
<text x="1399.0" y="409.4" fill="#006464" font-size="16.5" text-anchor="middle" textLength="43.7" lengthAdjust="spacing">2.2µF</text>
<text x="1456.0" y="482.7" fill="#006464" font-size="16.5" text-anchor="middle" textLength="19.8" lengthAdjust="spacing">C2</text>
<text x="1456.0" y="503.7" fill="#006464" font-size="16.5" text-anchor="middle" textLength="43.7" lengthAdjust="spacing">2.2µF</text>
<line x1="1670.4" y1="561.5" x2="1670.4" y2="601.4" stroke="#840000" stroke-width="1.2"/>
<line x1="1690.4" y1="561.5" x2="1690.4" y2="601.4" stroke="#840000" stroke-width="1.2"/>
<polyline points="1670.4,601.4 1690.4,601.4" stroke="#009600" stroke-width="1.3" fill="none"/>
<circle cx="1680.3" cy="601.4" r="4.3" fill="#009600"/>
<line x1="1680.3" y1="601.4" x2="1680.3" y2="611.6" stroke="#840000" stroke-width="1.2"/>
<polygon points="1669.9,611.6 1690.7,611.6 1680.3,622.0" stroke="#840000" stroke-width="1.2" fill="none"/>
<text x="1680.3" y="648.5" fill="#006464" font-size="16.5" text-anchor="middle" textLength="29.7" lengthAdjust="spacing">GND</text>
<g transform="translate(1662.0,581.0) rotate(-90)"><text x="0" y="5.9" fill="#a90000" font-size="16.5" text-anchor="middle" textLength="18.9" lengthAdjust="spacing">10</text></g>
<g transform="translate(1683.6,581.0) rotate(-90)"><text x="0" y="5.9" fill="#a90000" font-size="16.5" text-anchor="middle" textLength="18.9" lengthAdjust="spacing">19</text></g>
<g transform="translate(1670.4,555.0) rotate(-90)"><text class="y" x="0" y="5.9" fill="#006464" font-size="16.5" text-anchor="start" textLength="29.7" lengthAdjust="spacing">VSS</text></g>
<g transform="translate(1691.0,555.0) rotate(-90)"><text class="y" x="0" y="5.9" fill="#006464" font-size="16.5" text-anchor="start" textLength="39.6" lengthAdjust="spacing">VSSA</text></g>
<text x="1710.0" y="587.9" fill="#006464" font-size="16.5" text-anchor="start" textLength="18.9" lengthAdjust="spacing">U1</text>
<text x="1710.0" y="608.1" fill="#006464" font-size="16.5" text-anchor="start" textLength="121.2" lengthAdjust="spacing">STM32H743VITx</text>
<rect x="2068.3" y="60.0" width="164.3" height="82.3" stroke="#840000" stroke-width="2.4" fill="#ffffc2"/>
<rect x="2128.2" y="133.5" width="4.6" height="8.8" stroke="#840000" stroke-width="1.2" fill="none"/>
<line x1="2130.5" y1="142.3" x2="2130.5" y2="162.2" stroke="#840000" stroke-width="1.2"/>
<rect x="2148.1" y="133.5" width="4.6" height="8.8" stroke="#840000" stroke-width="1.2" fill="none"/>
<line x1="2150.4" y1="142.3" x2="2150.4" y2="162.2" stroke="#840000" stroke-width="1.2"/>
<polyline points="2130.5,162.2 2150.4,162.2" stroke="#009600" stroke-width="1.3" fill="none"/>
<circle cx="2140.3" cy="162.2" r="4.3" fill="#009600"/>
<line x1="2140.3" y1="162.2" x2="2140.3" y2="172.4" stroke="#840000" stroke-width="1.2"/>
<polygon points="2129.9,172.4 2150.7,172.4 2140.3,182.8" stroke="#840000" stroke-width="1.2" fill="none"/>
<text x="2140.3" y="209.4" fill="#006464" font-size="16.5" text-anchor="middle" textLength="29.7" lengthAdjust="spacing">GND</text>
<g transform="translate(2129.3,130.0) rotate(-90)"><text class="y" x="0" y="5.9" fill="#006464" font-size="16.5" text-anchor="start" textLength="39.6" lengthAdjust="spacing">GNDD</text></g>
<g transform="translate(2150.4,130.0) rotate(-90)"><text class="y" x="0" y="5.9" fill="#006464" font-size="16.5" text-anchor="start" textLength="29.7" lengthAdjust="spacing">GND</text></g>
<g transform="translate(2122.3,152.0) rotate(-90)"><text x="0" y="5.9" fill="#a90000" font-size="16.5" text-anchor="middle" textLength="9.9" lengthAdjust="spacing">9</text></g>
<g transform="translate(2142.0,152.0) rotate(-90)"><text x="0" y="5.9" fill="#a90000" font-size="16.5" text-anchor="middle" textLength="9.9" lengthAdjust="spacing">3</text></g>
<rect x="178.5" y="387.5" width="1063.0" height="286.0" stroke="#0000c2" stroke-width="1.3" fill="none"/>
<text x="193.2" y="417.4" fill="#0000c2" font-size="16.5" text-anchor="start" textLength="101.0" lengthAdjust="spacing">THERMISTORS</text>
<line x1="372.6" y1="458.5" x2="372.6" y2="438.1" stroke="#840000" stroke-width="1.2"/>
<polyline points="366.2,448.6 372.6,438.1 379.0,448.6" stroke="#840000" stroke-width="1.2" fill="none"/>
<text x="372.6" y="423.9" fill="#006464" font-size="16.5" text-anchor="middle" textLength="43.7" lengthAdjust="spacing">+3.3V</text>
<line x1="372.6" y1="458.5" x2="372.6" y2="468.7" stroke="#840000" stroke-width="1.2"/>
<rect x="364.4" y="468.7" width="16.4" height="41.6" stroke="#840000" stroke-width="2.2" fill="none"/>
<line x1="372.6" y1="510.3" x2="372.6" y2="520.4" stroke="#840000" stroke-width="1.2"/>
<text x="329.3" y="482.7" fill="#006464" font-size="16.5" text-anchor="start" textLength="28.8" lengthAdjust="spacing">R19</text>
<text x="329.3" y="503.4" fill="#006464" font-size="16.5" text-anchor="start" textLength="34.9" lengthAdjust="spacing">2.2K</text>
<text x="401.9" y="482.7" fill="#006464" font-size="16.5" text-anchor="start" textLength="28.8" lengthAdjust="spacing">R41</text>
<text x="406.2" y="503.4" fill="#006464" font-size="16.5" text-anchor="start" textLength="18.9" lengthAdjust="spacing">1K</text>
<rect x="270.0" y="509.7" width="20.8" height="41.3" stroke="#840000" stroke-width="2.2" fill="#ffffc2"/>
<rect x="280.8" y="519.2" width="10.0" height="2.4" stroke="#840000" stroke-width="1.0" fill="none"/>
<rect x="280.8" y="539.0" width="10.0" height="2.4" stroke="#840000" stroke-width="1.0" fill="none"/>
<line x1="290.8" y1="520.4" x2="320.3" y2="520.4" stroke="#840000" stroke-width="1.2"/>
<line x1="290.8" y1="540.2" x2="321.4" y2="540.2" stroke="#840000" stroke-width="1.2"/>
<text x="305.8" y="518.4" fill="#a90000" font-size="16.5" text-anchor="middle" textLength="9.0" lengthAdjust="spacing">1</text>
<text x="305.8" y="537.6" fill="#a90000" font-size="16.5" text-anchor="middle" textLength="9.9" lengthAdjust="spacing">2</text>
<polyline points="320.3,520.4 382.3,520.4" stroke="#009600" stroke-width="1.3" fill="none"/>
<polyline points="321.4,540.2 321.4,581.3 372.6,581.3" stroke="#009600" stroke-width="1.3" fill="none"/>
<circle cx="341.2" cy="520.4" r="4.3" fill="#009600"/>
<circle cx="372.6" cy="520.4" r="4.3" fill="#009600"/>
<circle cx="341.2" cy="581.3" r="4.3" fill="#009600"/>
<circle cx="372.6" cy="581.3" r="4.3" fill="#009600"/>
<line x1="341.2" y1="520.4" x2="341.2" y2="581.3" stroke="#840000" stroke-width="1.2"/>
<polygon points="331.2,530.6 351.2,530.6 341.2,551.0" stroke="#840000" stroke-width="2.6" fill="none"/>
<polygon points="331.2,571.7 351.2,571.7 341.2,551.0" stroke="#840000" stroke-width="2.6" fill="none"/>
<polyline points="331.2,547.0 331.2,551.0 351.2,551.0 351.2,555.0" stroke="#840000" stroke-width="1.8" fill="none"/>
<line x1="382.3" y1="520.4" x2="393.0" y2="520.4" stroke="#840000" stroke-width="1.2"/>
<rect x="393.0" y="512.2" width="41.0" height="16.4" stroke="#840000" stroke-width="2.2" fill="none"/>
<line x1="434.0" y1="520.4" x2="444.6" y2="520.4" stroke="#840000" stroke-width="1.2"/>
<polygon points="444.6,520.4 453.2,510.2 533.5,510.2 533.5,530.6 453.2,530.6" stroke="#840000" stroke-width="1.2" fill="none"/>
<text x="457.2" y="526.3" fill="#840000" font-size="16.5" text-anchor="start" textLength="68.3" lengthAdjust="spacing">THERMO1</text>
<line x1="372.6" y1="520.4" x2="372.6" y2="544.1" stroke="#840000" stroke-width="1.2"/>
<line x1="356.1" y1="544.1" x2="389.1" y2="544.1" stroke="#840000" stroke-width="3.2" stroke-linecap="round"/>
<line x1="356.1" y1="556.9" x2="389.1" y2="556.9" stroke="#840000" stroke-width="3.2" stroke-linecap="round"/>
<line x1="372.6" y1="556.9" x2="372.6" y2="581.3" stroke="#840000" stroke-width="1.2"/>
<line x1="372.6" y1="581.3" x2="372.6" y2="591.5" stroke="#840000" stroke-width="1.2"/>
<polygon points="362.2,591.5 383.0,591.5 372.6,601.9" stroke="#840000" stroke-width="1.2" fill="none"/>
<text x="372.6" y="628.4" fill="#006464" font-size="16.5" text-anchor="middle" textLength="29.7" lengthAdjust="spacing">GND</text>
<text x="396.6" y="550.4" fill="#006464" font-size="16.5" text-anchor="start" textLength="29.7" lengthAdjust="spacing">C25</text>
<text x="396.6" y="570.7" fill="#006464" font-size="16.5" text-anchor="start" textLength="42.8" lengthAdjust="spacing">0.1µF</text>
<text x="295.0" y="537.9" fill="#006464" font-size="16.5" text-anchor="start" textLength="19.8" lengthAdjust="spacing">D3</text>
<text x="295.0" y="558.5" fill="#006464" font-size="16.5" text-anchor="start" textLength="48.7" lengthAdjust="spacing">D_TVS</text>
<text x="264.2" y="575.0" fill="#006464" font-size="16.5" text-anchor="middle" textLength="90.0" lengthAdjust="spacing">Conn_01x02</text>
<text x="264.7" y="595.7" fill="#006464" font-size="16.5" text-anchor="middle" textLength="19.8" lengthAdjust="spacing">J6</text>
<line x1="699.6" y1="458.5" x2="699.6" y2="438.1" stroke="#840000" stroke-width="1.2"/>
<polyline points="693.2,448.6 699.6,438.1 706.0,448.6" stroke="#840000" stroke-width="1.2" fill="none"/>
<text x="699.6" y="423.9" fill="#006464" font-size="16.5" text-anchor="middle" textLength="43.7" lengthAdjust="spacing">+3.3V</text>
<line x1="699.6" y1="458.5" x2="699.6" y2="468.7" stroke="#840000" stroke-width="1.2"/>
<rect x="691.4" y="468.7" width="16.4" height="41.6" stroke="#840000" stroke-width="2.2" fill="none"/>
<line x1="699.6" y1="510.3" x2="699.6" y2="520.4" stroke="#840000" stroke-width="1.2"/>
<text x="656.3" y="482.7" fill="#006464" font-size="16.5" text-anchor="start" textLength="29.7" lengthAdjust="spacing">R42</text>
<text x="656.3" y="503.4" fill="#006464" font-size="16.5" text-anchor="start" textLength="34.9" lengthAdjust="spacing">2.2K</text>
<text x="728.9" y="482.7" fill="#006464" font-size="16.5" text-anchor="start" textLength="29.7" lengthAdjust="spacing">R43</text>
<text x="733.2" y="503.4" fill="#006464" font-size="16.5" text-anchor="start" textLength="18.9" lengthAdjust="spacing">1K</text>
<rect x="597.0" y="509.7" width="20.8" height="41.3" stroke="#840000" stroke-width="2.2" fill="#ffffc2"/>
<rect x="607.8" y="519.2" width="10.0" height="2.4" stroke="#840000" stroke-width="1.0" fill="none"/>
<rect x="607.8" y="539.0" width="10.0" height="2.4" stroke="#840000" stroke-width="1.0" fill="none"/>
<line x1="617.8" y1="520.4" x2="647.3" y2="520.4" stroke="#840000" stroke-width="1.2"/>
<line x1="617.8" y1="540.2" x2="648.4" y2="540.2" stroke="#840000" stroke-width="1.2"/>
<text x="632.8" y="518.4" fill="#a90000" font-size="16.5" text-anchor="middle" textLength="9.0" lengthAdjust="spacing">1</text>
<text x="632.8" y="537.6" fill="#a90000" font-size="16.5" text-anchor="middle" textLength="9.9" lengthAdjust="spacing">2</text>
<polyline points="647.3,520.4 709.3,520.4" stroke="#009600" stroke-width="1.3" fill="none"/>
<polyline points="648.4,540.2 648.4,581.3 699.6,581.3" stroke="#009600" stroke-width="1.3" fill="none"/>
<circle cx="668.2" cy="520.4" r="4.3" fill="#009600"/>
<circle cx="699.6" cy="520.4" r="4.3" fill="#009600"/>
<circle cx="668.2" cy="581.3" r="4.3" fill="#009600"/>
<circle cx="699.6" cy="581.3" r="4.3" fill="#009600"/>
<line x1="668.2" y1="520.4" x2="668.2" y2="581.3" stroke="#840000" stroke-width="1.2"/>
<polygon points="658.2,530.6 678.2,530.6 668.2,551.0" stroke="#840000" stroke-width="2.6" fill="none"/>
<polygon points="658.2,571.7 678.2,571.7 668.2,551.0" stroke="#840000" stroke-width="2.6" fill="none"/>
<polyline points="658.2,547.0 658.2,551.0 678.2,551.0 678.2,555.0" stroke="#840000" stroke-width="1.8" fill="none"/>
<line x1="709.3" y1="520.4" x2="720.0" y2="520.4" stroke="#840000" stroke-width="1.2"/>
<rect x="720.0" y="512.2" width="41.0" height="16.4" stroke="#840000" stroke-width="2.2" fill="none"/>
<line x1="761.0" y1="520.4" x2="771.6" y2="520.4" stroke="#840000" stroke-width="1.2"/>
<polygon points="771.6,520.4 780.2,510.2 860.5,510.2 860.5,530.6 780.2,530.6" stroke="#840000" stroke-width="1.2" fill="none"/>
<text x="784.2" y="526.3" fill="#840000" font-size="16.5" text-anchor="start" textLength="68.3" lengthAdjust="spacing">THERMO2</text>
<line x1="699.6" y1="520.4" x2="699.6" y2="544.1" stroke="#840000" stroke-width="1.2"/>
<line x1="683.1" y1="544.1" x2="716.1" y2="544.1" stroke="#840000" stroke-width="3.2" stroke-linecap="round"/>
<line x1="683.1" y1="556.9" x2="716.1" y2="556.9" stroke="#840000" stroke-width="3.2" stroke-linecap="round"/>
<line x1="699.6" y1="556.9" x2="699.6" y2="581.3" stroke="#840000" stroke-width="1.2"/>
<line x1="699.6" y1="581.3" x2="699.6" y2="591.5" stroke="#840000" stroke-width="1.2"/>
<polygon points="689.2,591.5 710.0,591.5 699.6,601.9" stroke="#840000" stroke-width="1.2" fill="none"/>
<text x="699.6" y="628.4" fill="#006464" font-size="16.5" text-anchor="middle" textLength="29.7" lengthAdjust="spacing">GND</text>
<text x="723.6" y="550.4" fill="#006464" font-size="16.5" text-anchor="start" textLength="29.7" lengthAdjust="spacing">C46</text>
<text x="723.6" y="570.7" fill="#006464" font-size="16.5" text-anchor="start" textLength="42.8" lengthAdjust="spacing">0.1µF</text>
<text x="622.0" y="537.9" fill="#006464" font-size="16.5" text-anchor="start" textLength="19.8" lengthAdjust="spacing">D5</text>
<text x="622.0" y="558.5" fill="#006464" font-size="16.5" text-anchor="start" textLength="48.7" lengthAdjust="spacing">D_TVS</text>
<text x="591.2" y="575.0" fill="#006464" font-size="16.5" text-anchor="middle" textLength="90.0" lengthAdjust="spacing">Conn_01x02</text>
<text x="591.7" y="595.7" fill="#006464" font-size="16.5" text-anchor="middle" textLength="28.8" lengthAdjust="spacing">J13</text>
<line x1="1026.6" y1="458.5" x2="1026.6" y2="438.1" stroke="#840000" stroke-width="1.2"/>
<polyline points="1020.2,448.6 1026.6,438.1 1033.0,448.6" stroke="#840000" stroke-width="1.2" fill="none"/>
<text x="1026.6" y="423.9" fill="#006464" font-size="16.5" text-anchor="middle" textLength="43.7" lengthAdjust="spacing">+3.3V</text>
<line x1="1026.6" y1="458.5" x2="1026.6" y2="468.7" stroke="#840000" stroke-width="1.2"/>
<rect x="1018.4" y="468.7" width="16.4" height="41.6" stroke="#840000" stroke-width="2.2" fill="none"/>
<line x1="1026.6" y1="510.3" x2="1026.6" y2="520.4" stroke="#840000" stroke-width="1.2"/>
<text x="983.3" y="482.7" fill="#006464" font-size="16.5" text-anchor="start" textLength="29.7" lengthAdjust="spacing">R44</text>
<text x="983.3" y="503.4" fill="#006464" font-size="16.5" text-anchor="start" textLength="34.9" lengthAdjust="spacing">2.2K</text>
<text x="1055.9" y="482.7" fill="#006464" font-size="16.5" text-anchor="start" textLength="29.7" lengthAdjust="spacing">R45</text>
<text x="1060.2" y="503.4" fill="#006464" font-size="16.5" text-anchor="start" textLength="18.9" lengthAdjust="spacing">1K</text>
<rect x="924.0" y="509.7" width="20.8" height="41.3" stroke="#840000" stroke-width="2.2" fill="#ffffc2"/>
<rect x="934.8" y="519.2" width="10.0" height="2.4" stroke="#840000" stroke-width="1.0" fill="none"/>
<rect x="934.8" y="539.0" width="10.0" height="2.4" stroke="#840000" stroke-width="1.0" fill="none"/>
<line x1="944.8" y1="520.4" x2="974.3" y2="520.4" stroke="#840000" stroke-width="1.2"/>
<line x1="944.8" y1="540.2" x2="975.4" y2="540.2" stroke="#840000" stroke-width="1.2"/>
<text x="959.8" y="518.4" fill="#a90000" font-size="16.5" text-anchor="middle" textLength="9.0" lengthAdjust="spacing">1</text>
<text x="959.8" y="537.6" fill="#a90000" font-size="16.5" text-anchor="middle" textLength="9.9" lengthAdjust="spacing">2</text>
<polyline points="974.3,520.4 1036.3,520.4" stroke="#009600" stroke-width="1.3" fill="none"/>
<polyline points="975.4,540.2 975.4,581.3 1026.6,581.3" stroke="#009600" stroke-width="1.3" fill="none"/>
<circle cx="995.2" cy="520.4" r="4.3" fill="#009600"/>
<circle cx="1026.6" cy="520.4" r="4.3" fill="#009600"/>
<circle cx="995.2" cy="581.3" r="4.3" fill="#009600"/>
<circle cx="1026.6" cy="581.3" r="4.3" fill="#009600"/>
<line x1="995.2" y1="520.4" x2="995.2" y2="581.3" stroke="#840000" stroke-width="1.2"/>
<polygon points="985.2,530.6 1005.2,530.6 995.2,551.0" stroke="#840000" stroke-width="2.6" fill="none"/>
<polygon points="985.2,571.7 1005.2,571.7 995.2,551.0" stroke="#840000" stroke-width="2.6" fill="none"/>
<polyline points="985.2,547.0 985.2,551.0 1005.2,551.0 1005.2,555.0" stroke="#840000" stroke-width="1.8" fill="none"/>
<line x1="1036.3" y1="520.4" x2="1047.0" y2="520.4" stroke="#840000" stroke-width="1.2"/>
<rect x="1047.0" y="512.2" width="41.0" height="16.4" stroke="#840000" stroke-width="2.2" fill="none"/>
<line x1="1088.0" y1="520.4" x2="1098.6" y2="520.4" stroke="#840000" stroke-width="1.2"/>
<polygon points="1098.6,520.4 1107.2,510.2 1187.5,510.2 1187.5,530.6 1107.2,530.6" stroke="#840000" stroke-width="1.2" fill="none"/>
<text x="1111.2" y="526.3" fill="#840000" font-size="16.5" text-anchor="start" textLength="68.3" lengthAdjust="spacing">THERMO3</text>
<line x1="1026.6" y1="520.4" x2="1026.6" y2="544.1" stroke="#840000" stroke-width="1.2"/>
<line x1="1010.1" y1="544.1" x2="1043.1" y2="544.1" stroke="#840000" stroke-width="3.2" stroke-linecap="round"/>
<line x1="1010.1" y1="556.9" x2="1043.1" y2="556.9" stroke="#840000" stroke-width="3.2" stroke-linecap="round"/>
<line x1="1026.6" y1="556.9" x2="1026.6" y2="581.3" stroke="#840000" stroke-width="1.2"/>
<line x1="1026.6" y1="581.3" x2="1026.6" y2="591.5" stroke="#840000" stroke-width="1.2"/>
<polygon points="1016.2,591.5 1037.0,591.5 1026.6,601.9" stroke="#840000" stroke-width="1.2" fill="none"/>
<text x="1026.6" y="628.4" fill="#006464" font-size="16.5" text-anchor="middle" textLength="29.7" lengthAdjust="spacing">GND</text>
<text x="1050.6" y="550.4" fill="#006464" font-size="16.5" text-anchor="start" textLength="29.7" lengthAdjust="spacing">C47</text>
<text x="1050.6" y="570.7" fill="#006464" font-size="16.5" text-anchor="start" textLength="42.8" lengthAdjust="spacing">0.1µF</text>
<text x="949.0" y="537.9" fill="#006464" font-size="16.5" text-anchor="start" textLength="19.8" lengthAdjust="spacing">D6</text>
<text x="949.0" y="558.5" fill="#006464" font-size="16.5" text-anchor="start" textLength="48.7" lengthAdjust="spacing">D_TVS</text>
<text x="918.2" y="575.0" fill="#006464" font-size="16.5" text-anchor="middle" textLength="90.0" lengthAdjust="spacing">Conn_01x02</text>
<text x="918.7" y="595.7" fill="#006464" font-size="16.5" text-anchor="middle" textLength="28.8" lengthAdjust="spacing">J14</text>
<rect x="178.5" y="693.5" width="562.0" height="297.0" stroke="#0000c2" stroke-width="1.3" fill="none"/>
<text x="191.0" y="719.9" fill="#0000c2" font-size="16.5" text-anchor="start" textLength="108.0" lengthAdjust="spacing">SERVO/PROBE</text>
<rect x="260.0" y="837.0" width="20.7" height="61.9" stroke="#840000" stroke-width="2.2" fill="#ffffc2"/>
<rect x="270.6" y="846.2" width="10.1" height="2.4" stroke="#840000" stroke-width="1.0" fill="none"/>
<line x1="280.7" y1="847.4" x2="311.1" y2="847.4" stroke="#840000" stroke-width="1.2"/>
<text x="295.8" y="844.3" fill="#a90000" font-size="16.5" text-anchor="middle" textLength="9.9" lengthAdjust="spacing">3</text>
<rect x="270.6" y="866.1" width="10.1" height="2.4" stroke="#840000" stroke-width="1.0" fill="none"/>
<line x1="280.7" y1="867.3" x2="311.1" y2="867.3" stroke="#840000" stroke-width="1.2"/>
<text x="295.8" y="864.2" fill="#a90000" font-size="16.5" text-anchor="middle" textLength="9.9" lengthAdjust="spacing">2</text>
<rect x="270.6" y="886.9" width="10.1" height="2.4" stroke="#840000" stroke-width="1.0" fill="none"/>
<line x1="280.7" y1="888.1" x2="311.1" y2="888.1" stroke="#840000" stroke-width="1.2"/>
<text x="295.8" y="885.0" fill="#a90000" font-size="16.5" text-anchor="middle" textLength="9.0" lengthAdjust="spacing">1</text>
<polyline points="311.1,847.4 311.1,806.2 331.2,806.2" stroke="#009600" stroke-width="1.3" fill="none"/>
<circle cx="331.2" cy="806.2" r="4.3" fill="#009600"/>
<line x1="331.2" y1="806.2" x2="331.2" y2="785.8" stroke="#840000" stroke-width="1.2"/>
<polyline points="324.8,796.3 331.2,785.8 337.6,796.3" stroke="#840000" stroke-width="1.2" fill="none"/>
<text x="331.2" y="770.9" fill="#006464" font-size="16.5" text-anchor="middle" textLength="28.6" lengthAdjust="spacing">+5V</text>
<line x1="331.2" y1="806.2" x2="331.2" y2="830.2" stroke="#840000" stroke-width="1.2"/>
<line x1="313.7" y1="830.2" x2="348.7" y2="830.2" stroke="#840000" stroke-width="3.2" stroke-linecap="round"/>
<line x1="313.7" y1="843.3" x2="348.7" y2="843.3" stroke="#840000" stroke-width="3.2" stroke-linecap="round"/>
<line x1="331.2" y1="843.3" x2="331.2" y2="867.3" stroke="#840000" stroke-width="1.2"/>
<polyline points="311.1,867.3 331.2,867.3" stroke="#009600" stroke-width="1.3" fill="none"/>
<circle cx="331.2" cy="867.3" r="4.3" fill="#009600"/>
<line x1="331.2" y1="867.3" x2="331.2" y2="877.5" stroke="#840000" stroke-width="1.2"/>
<polygon points="320.8,877.5 341.6,877.5 331.2,887.9" stroke="#840000" stroke-width="1.2" fill="none"/>
<text x="331.2" y="913.9" fill="#006464" font-size="16.5" text-anchor="middle" textLength="29.7" lengthAdjust="spacing">GND</text>
<text x="364.4" y="832.0" fill="#006464" font-size="16.5" text-anchor="start" textLength="29.7" lengthAdjust="spacing">C49</text>
<text x="364.4" y="852.2" fill="#006464" font-size="16.5" text-anchor="start" textLength="42.8" lengthAdjust="spacing">0.1µF</text>
<text x="262.0" y="799.5" fill="#006464" font-size="16.5" text-anchor="middle" textLength="28.8" lengthAdjust="spacing">J15</text>
<text x="262.3" y="820.1" fill="#006464" font-size="16.5" text-anchor="middle" textLength="90.0" lengthAdjust="spacing">Conn_01x03</text>
<polyline points="311.1,888.1 393.4,888.1" stroke="#009600" stroke-width="1.3" fill="none"/>
<polygon points="393.4,888.1 402.0,877.9 461.4,877.9 461.4,898.3 402.0,898.3" stroke="#840000" stroke-width="1.2" fill="none"/>
<text x="406.0" y="894.0" fill="#840000" font-size="16.5" text-anchor="start" textLength="47.4" lengthAdjust="spacing">SERVO</text>
<rect x="515.1" y="857.0" width="21.7" height="41.9" stroke="#840000" stroke-width="2.2" fill="#ffffc2"/>
<rect x="525.6" y="866.1" width="11.2" height="2.4" stroke="#840000" stroke-width="1.0" fill="none"/>
<line x1="536.8" y1="867.3" x2="566.1" y2="867.3" stroke="#840000" stroke-width="1.2"/>
<text x="551.5" y="864.2" fill="#a90000" font-size="16.5" text-anchor="middle" textLength="9.9" lengthAdjust="spacing">2</text>
<rect x="525.6" y="886.9" width="11.2" height="2.4" stroke="#840000" stroke-width="1.0" fill="none"/>
<line x1="536.8" y1="888.1" x2="566.1" y2="888.1" stroke="#840000" stroke-width="1.2"/>
<text x="551.5" y="885.0" fill="#a90000" font-size="16.5" text-anchor="middle" textLength="9.0" lengthAdjust="spacing">1</text>
<polyline points="566.1,867.3 577.6,867.3 577.6,877.8" stroke="#009600" stroke-width="1.3" fill="none"/>
<polygon points="567.0,877.8 588.0,877.8 577.6,888.1" stroke="#840000" stroke-width="1.2" fill="none"/>
<text x="577.0" y="913.9" fill="#006464" font-size="16.5" text-anchor="middle" textLength="29.7" lengthAdjust="spacing">GND</text>
<polyline points="566.1,888.1 607.3,888.1" stroke="#009600" stroke-width="1.3" fill="none"/>
<circle cx="597.5" cy="888.1" r="4.3" fill="#009600"/>
<rect x="589.3" y="837.0" width="16.4" height="40.1" stroke="#840000" stroke-width="2.2" fill="none"/>
<line x1="597.5" y1="877.1" x2="597.5" y2="888.1" stroke="#840000" stroke-width="1.2"/>
<line x1="597.5" y1="837.0" x2="597.5" y2="806.2" stroke="#840000" stroke-width="1.2"/>
<polyline points="591.1,816.7 597.5,806.2 603.9,816.7" stroke="#840000" stroke-width="1.2" fill="none"/>
<text x="597.5" y="791.5" fill="#006464" font-size="16.5" text-anchor="middle" textLength="43.7" lengthAdjust="spacing">+3.3V</text>
<text x="619.9" y="852.9" fill="#006464" font-size="16.5" text-anchor="start" textLength="29.7" lengthAdjust="spacing">R46</text>
<text x="619.9" y="873.9" fill="#006464" font-size="16.5" text-anchor="start" textLength="28.8" lengthAdjust="spacing">10K</text>
<text x="525.4" y="822.4" fill="#006464" font-size="16.5" text-anchor="middle" textLength="28.8" lengthAdjust="spacing">J16</text>
<text x="526.0" y="842.3" fill="#006464" font-size="16.5" text-anchor="middle" textLength="90.0" lengthAdjust="spacing">Conn_01x02</text>
<polygon points="607.3,888.1 615.9,877.9 718.2,877.9 718.2,898.3 615.9,898.3" stroke="#840000" stroke-width="1.2" fill="none"/>
<text x="619.9" y="894.0" fill="#840000" font-size="16.5" text-anchor="start" textLength="90.3" lengthAdjust="spacing">PROBE_TRIG</text>
<rect x="760.5" y="693.5" width="767.0" height="297.0" stroke="#0000c2" stroke-width="1.3" fill="none"/>
<text x="774.7" y="720.1" fill="#0000c2" font-size="16.5" text-anchor="start" textLength="60.0" lengthAdjust="spacing">TFT/LCD</text>
<rect x="812.2" y="785.3" width="20.6" height="103.2" stroke="#840000" stroke-width="2.2" fill="#ffffc2"/>
<rect x="822.3" y="794.8" width="10.5" height="2.4" stroke="#840000" stroke-width="1.0" fill="none"/>
<line x1="832.8" y1="796.0" x2="863.1" y2="796.0" stroke="#840000" stroke-width="1.2"/>
<text x="847.4" y="792.9" fill="#a90000" font-size="16.5" text-anchor="middle" textLength="9.9" lengthAdjust="spacing">5</text>
<rect x="822.3" y="815.0" width="10.5" height="2.4" stroke="#840000" stroke-width="1.0" fill="none"/>
<line x1="832.8" y1="816.2" x2="863.1" y2="816.2" stroke="#840000" stroke-width="1.2"/>
<text x="847.4" y="813.1" fill="#a90000" font-size="16.5" text-anchor="middle" textLength="9.9" lengthAdjust="spacing">4</text>
<rect x="822.3" y="835.9" width="10.5" height="2.4" stroke="#840000" stroke-width="1.0" fill="none"/>
<line x1="832.8" y1="837.1" x2="863.1" y2="837.1" stroke="#840000" stroke-width="1.2"/>
<text x="847.4" y="834.0" fill="#a90000" font-size="16.5" text-anchor="middle" textLength="9.9" lengthAdjust="spacing">3</text>
<rect x="822.3" y="856.1" width="10.5" height="2.4" stroke="#840000" stroke-width="1.0" fill="none"/>
<line x1="832.8" y1="857.3" x2="863.1" y2="857.3" stroke="#840000" stroke-width="1.2"/>
<text x="847.4" y="854.2" fill="#a90000" font-size="16.5" text-anchor="middle" textLength="9.9" lengthAdjust="spacing">2</text>
<rect x="822.3" y="876.0" width="10.5" height="2.4" stroke="#840000" stroke-width="1.0" fill="none"/>
<line x1="832.8" y1="877.2" x2="863.1" y2="877.2" stroke="#840000" stroke-width="1.2"/>
<text x="847.4" y="874.1" fill="#a90000" font-size="16.5" text-anchor="middle" textLength="9.0" lengthAdjust="spacing">1</text>
<line x1="863.1" y1="796.0" x2="873.2" y2="796.0" stroke="#840000" stroke-width="1.2"/>
<rect x="873.2" y="787.8" width="41.5" height="16.4" stroke="#840000" stroke-width="2.2" fill="none"/>
<line x1="914.7" y1="796.0" x2="924.8" y2="796.0" stroke="#840000" stroke-width="1.2"/>
<polygon points="924.8,796.0 933.4,785.8 982.7,785.8 982.7,806.2 933.4,806.2" stroke="#840000" stroke-width="1.2" fill="none"/>
<text x="937.4" y="801.9" fill="#840000" font-size="16.5" text-anchor="start" textLength="37.3" lengthAdjust="spacing">NRST</text>
<text x="880.0" y="754.9" fill="#006464" font-size="16.5" text-anchor="start" textLength="29.7" lengthAdjust="spacing">R47</text>
<text x="880.0" y="776.1" fill="#006464" font-size="16.5" text-anchor="start" textLength="18.9" lengthAdjust="spacing">1K</text>
<text x="822.3" y="754.9" fill="#006464" font-size="16.5" text-anchor="middle" textLength="28.8" lengthAdjust="spacing">J17</text>
<text x="821.8" y="776.1" fill="#006464" font-size="16.5" text-anchor="middle" textLength="90.0" lengthAdjust="spacing">Conn_01x05</text>
<polyline points="863.1,816.2 914.7,816.2" stroke="#009600" stroke-width="1.3" fill="none"/>
<polygon points="914.7,816.2 923.3,806.0 985.4,806.0 985.4,826.4 923.3,826.4" stroke="#840000" stroke-width="1.2" fill="none"/>
<text x="927.3" y="822.1" fill="#840000" font-size="16.5" text-anchor="start" textLength="50.1" lengthAdjust="spacing">TFT_RX</text>
<polyline points="863.1,837.1 914.7,837.1" stroke="#009600" stroke-width="1.3" fill="none"/>
<polygon points="914.7,837.1 923.3,826.9 983.4,826.9 983.4,847.3 923.3,847.3" stroke="#840000" stroke-width="1.2" fill="none"/>
<text x="927.3" y="843.0" fill="#840000" font-size="16.5" text-anchor="start" textLength="48.1" lengthAdjust="spacing">TFT_TX</text>
<line x1="883.3" y1="857.3" x2="883.3" y2="837.5" stroke="#840000" stroke-width="1.2"/>
<polyline points="876.9,848.0 883.3,837.5 889.7,848.0" stroke="#840000" stroke-width="1.2" fill="none"/>
<text x="892.3" y="852.4" fill="#006464" font-size="16.5" text-anchor="start" textLength="28.6" lengthAdjust="spacing">+5V</text>
<polyline points="863.1,857.3 883.3,857.3" stroke="#009600" stroke-width="1.3" fill="none"/>
<circle cx="883.3" cy="857.3" r="4.3" fill="#009600"/>
<line x1="883.3" y1="857.3" x2="883.3" y2="881.3" stroke="#840000" stroke-width="1.2"/>
<line x1="865.8" y1="881.3" x2="900.8" y2="881.3" stroke="#840000" stroke-width="3.2" stroke-linecap="round"/>
<line x1="865.8" y1="894.3" x2="900.8" y2="894.3" stroke="#840000" stroke-width="3.2" stroke-linecap="round"/>
<line x1="883.3" y1="894.3" x2="883.3" y2="918.3" stroke="#840000" stroke-width="1.2"/>
<polyline points="863.1,877.2 863.1,918.3 883.3,918.3" stroke="#009600" stroke-width="1.3" fill="none"/>
<circle cx="883.3" cy="918.3" r="4.3" fill="#009600"/>
<line x1="883.3" y1="918.3" x2="883.3" y2="928.5" stroke="#840000" stroke-width="1.2"/>
<polygon points="872.9,928.5 893.7,928.5 883.3,938.9" stroke="#840000" stroke-width="1.2" fill="none"/>
<text x="883.3" y="965.0" fill="#006464" font-size="16.5" text-anchor="middle" textLength="29.7" lengthAdjust="spacing">GND</text>
<text x="916.0" y="883.1" fill="#006464" font-size="16.5" text-anchor="start" textLength="29.7" lengthAdjust="spacing">C2B</text>
<text x="916.0" y="902.9" fill="#006464" font-size="16.5" text-anchor="start" textLength="9.9" lengthAdjust="spacing">C</text>
<rect x="1036.0" y="745.1" width="21.8" height="204.6" stroke="#840000" stroke-width="2.2" fill="#ffffc2"/>
<rect x="1047.3" y="754.0" width="10.5" height="2.4" stroke="#840000" stroke-width="1.0" fill="none"/>
<line x1="1057.8" y1="755.2" x2="1087.4" y2="755.2" stroke="#840000" stroke-width="1.2"/>
<text x="1072.4" y="752.1" fill="#a90000" font-size="16.5" text-anchor="middle" textLength="9.0" lengthAdjust="spacing">1</text>
<polygon points="1087.4,755.2 1096.0,745.0 1183.4,745.0 1183.4,765.4 1096.0,765.4" stroke="#840000" stroke-width="1.2" fill="none"/>
<text x="1100.0" y="761.1" fill="#840000" font-size="16.5" text-anchor="start" textLength="75.4" lengthAdjust="spacing">LCD_BEEP</text>
<rect x="1047.3" y="774.2" width="10.5" height="2.4" stroke="#840000" stroke-width="1.0" fill="none"/>
<line x1="1057.8" y1="775.4" x2="1087.4" y2="775.4" stroke="#840000" stroke-width="1.2"/>
<text x="1072.4" y="772.3" fill="#a90000" font-size="16.5" text-anchor="middle" textLength="9.9" lengthAdjust="spacing">2</text>
<polygon points="1087.4,775.4 1096.0,765.2 1172.7,765.2 1172.7,785.6 1096.0,785.6" stroke="#840000" stroke-width="1.2" fill="none"/>
<text x="1100.0" y="781.3" fill="#840000" font-size="16.5" text-anchor="start" textLength="64.7" lengthAdjust="spacing">LCD_BTN</text>
<rect x="1047.3" y="794.8" width="10.5" height="2.4" stroke="#840000" stroke-width="1.0" fill="none"/>
<line x1="1057.8" y1="796.0" x2="1087.4" y2="796.0" stroke="#840000" stroke-width="1.2"/>
<text x="1072.4" y="792.9" fill="#a90000" font-size="16.5" text-anchor="middle" textLength="9.9" lengthAdjust="spacing">3</text>
<polygon points="1087.4,796.0 1096.0,785.8 1164.4,785.8 1164.4,806.2 1096.0,806.2" stroke="#840000" stroke-width="1.2" fill="none"/>
<text x="1100.0" y="801.9" fill="#840000" font-size="16.5" text-anchor="start" textLength="56.4" lengthAdjust="spacing">LCD_EN</text>
<rect x="1047.3" y="815.0" width="10.5" height="2.4" stroke="#840000" stroke-width="1.0" fill="none"/>
<line x1="1057.8" y1="816.2" x2="1087.4" y2="816.2" stroke="#840000" stroke-width="1.2"/>
<text x="1072.4" y="813.1" fill="#a90000" font-size="16.5" text-anchor="middle" textLength="9.9" lengthAdjust="spacing">4</text>
<polygon points="1087.4,816.2 1096.0,806.0 1164.4,806.0 1164.4,826.4 1096.0,826.4" stroke="#840000" stroke-width="1.2" fill="none"/>
<text x="1100.0" y="822.1" fill="#840000" font-size="16.5" text-anchor="start" textLength="56.4" lengthAdjust="spacing">LCD_CS</text>
<rect x="1047.3" y="835.9" width="10.5" height="2.4" stroke="#840000" stroke-width="1.0" fill="none"/>
<line x1="1057.8" y1="837.1" x2="1087.4" y2="837.1" stroke="#840000" stroke-width="1.2"/>
<text x="1072.4" y="834.0" fill="#a90000" font-size="16.5" text-anchor="middle" textLength="9.9" lengthAdjust="spacing">5</text>
<polygon points="1087.4,837.1 1096.0,826.9 1164.4,826.9 1164.4,847.3 1096.0,847.3" stroke="#840000" stroke-width="1.2" fill="none"/>
<text x="1100.0" y="843.0" fill="#840000" font-size="16.5" text-anchor="start" textLength="56.4" lengthAdjust="spacing">LCD_D4</text>
<rect x="1047.3" y="856.1" width="10.5" height="2.4" stroke="#840000" stroke-width="1.0" fill="none"/>
<line x1="1057.8" y1="857.3" x2="1087.4" y2="857.3" stroke="#840000" stroke-width="1.2"/>
<text x="1072.4" y="854.2" fill="#a90000" font-size="16.5" text-anchor="middle" textLength="9.9" lengthAdjust="spacing">6</text>
<polygon points="1087.4,857.3 1096.0,847.1 1164.4,847.1 1164.4,867.5 1096.0,867.5" stroke="#840000" stroke-width="1.2" fill="none"/>
<text x="1100.0" y="863.2" fill="#840000" font-size="16.5" text-anchor="start" textLength="56.4" lengthAdjust="spacing">LCD_D5</text>
<rect x="1047.3" y="876.0" width="10.5" height="2.4" stroke="#840000" stroke-width="1.0" fill="none"/>
<line x1="1057.8" y1="877.2" x2="1087.4" y2="877.2" stroke="#840000" stroke-width="1.2"/>
<text x="1072.4" y="874.1" fill="#a90000" font-size="16.5" text-anchor="middle" textLength="9.9" lengthAdjust="spacing">7</text>
<polygon points="1087.4,877.2 1096.0,867.0 1164.4,867.0 1164.4,887.4 1096.0,887.4" stroke="#840000" stroke-width="1.2" fill="none"/>
<text x="1100.0" y="883.1" fill="#840000" font-size="16.5" text-anchor="start" textLength="56.4" lengthAdjust="spacing">LCD_D6</text>
<rect x="1047.3" y="896.9" width="10.5" height="2.4" stroke="#840000" stroke-width="1.0" fill="none"/>
<line x1="1057.8" y1="898.1" x2="1087.4" y2="898.1" stroke="#840000" stroke-width="1.2"/>
<text x="1072.4" y="895.0" fill="#a90000" font-size="16.5" text-anchor="middle" textLength="9.9" lengthAdjust="spacing">8</text>
<polygon points="1087.4,898.1 1096.0,887.9 1164.4,887.9 1164.4,908.3 1096.0,908.3" stroke="#840000" stroke-width="1.2" fill="none"/>
<text x="1100.0" y="904.0" fill="#840000" font-size="16.5" text-anchor="start" textLength="56.4" lengthAdjust="spacing">LCD_D7</text>
<rect x="1047.3" y="917.1" width="10.5" height="2.4" stroke="#840000" stroke-width="1.0" fill="none"/>
<line x1="1057.8" y1="918.3" x2="1087.4" y2="918.3" stroke="#840000" stroke-width="1.2"/>
<text x="1072.4" y="915.2" fill="#a90000" font-size="16.5" text-anchor="middle" textLength="9.9" lengthAdjust="spacing">9</text>
<rect x="1047.3" y="938.4" width="10.5" height="2.4" stroke="#840000" stroke-width="1.0" fill="none"/>
<line x1="1057.8" y1="939.6" x2="1087.4" y2="939.6" stroke="#840000" stroke-width="1.2"/>
<text x="1072.4" y="936.5" fill="#a90000" font-size="16.5" text-anchor="middle" textLength="18.9" lengthAdjust="spacing">10</text>
<text x="1045.0" y="717.9" fill="#006464" font-size="16.5" text-anchor="middle" textLength="90.0" lengthAdjust="spacing">Conn_01x10</text>
<text x="1044.4" y="734.6" fill="#006464" font-size="16.5" text-anchor="middle" textLength="19.8" lengthAdjust="spacing">J9</text>
<polyline points="1087.4,918.3 1128.5,918.3 1128.5,928.4" stroke="#009600" stroke-width="1.3" fill="none"/>
<circle cx="1108.3" cy="918.3" r="4.3" fill="#009600"/>
<polygon points="1118.3,928.4 1139.0,928.4 1128.5,939.2" stroke="#840000" stroke-width="1.2" fill="none"/>
<text x="1140.8" y="934.3" fill="#006464" font-size="16.5" text-anchor="start" textLength="29.7" lengthAdjust="spacing">GND</text>
<polyline points="1087.4,939.6 1087.4,980.0 1128.5,980.0 1128.5,969.9" stroke="#009600" stroke-width="1.3" fill="none"/>
<circle cx="1108.3" cy="980.0" r="4.3" fill="#009600"/>
<line x1="1128.5" y1="980.0" x2="1128.5" y2="959.8" stroke="#840000" stroke-width="1.2"/>
<polyline points="1122.1,970.3 1128.5,959.8 1134.9,970.3" stroke="#840000" stroke-width="1.2" fill="none"/>
<text x="1135.7" y="975.8" fill="#006464" font-size="16.5" text-anchor="start" textLength="28.6" lengthAdjust="spacing">+5V</text>
<line x1="1108.3" y1="918.3" x2="1108.3" y2="943.6" stroke="#840000" stroke-width="1.2"/>
<line x1="1090.8" y1="943.6" x2="1125.8" y2="943.6" stroke="#840000" stroke-width="3.2" stroke-linecap="round"/>
<line x1="1090.8" y1="955.3" x2="1125.8" y2="955.3" stroke="#840000" stroke-width="3.2" stroke-linecap="round"/>
<line x1="1108.3" y1="955.3" x2="1108.3" y2="980.0" stroke="#840000" stroke-width="1.2"/>
<text x="1071.0" y="958.9" fill="#006464" font-size="16.5" text-anchor="middle" textLength="29.7" lengthAdjust="spacing">C43</text>
<text x="1065.7" y="979.9" fill="#006464" font-size="16.5" text-anchor="middle" textLength="42.8" lengthAdjust="spacing">0.1µF</text>
<rect x="1220.5" y="745.1" width="21.3" height="204.6" stroke="#840000" stroke-width="2.2" fill="#ffffc2"/>
<rect x="1230.6" y="754.0" width="11.2" height="2.4" stroke="#840000" stroke-width="1.0" fill="none"/>
<line x1="1241.8" y1="755.2" x2="1271.4" y2="755.2" stroke="#840000" stroke-width="1.2"/>
<text x="1256.4" y="752.1" fill="#a90000" font-size="16.5" text-anchor="middle" textLength="9.0" lengthAdjust="spacing">1</text>
<polygon points="1271.4,755.2 1280.0,745.0 1356.2,745.0 1356.2,765.4 1280.0,765.4" stroke="#840000" stroke-width="1.2" fill="none"/>
<text x="1284.0" y="761.1" fill="#840000" font-size="16.5" text-anchor="start" textLength="64.2" lengthAdjust="spacing">SD_MISO</text>
<rect x="1230.6" y="774.2" width="11.2" height="2.4" stroke="#840000" stroke-width="1.0" fill="none"/>
<line x1="1241.8" y1="775.4" x2="1271.4" y2="775.4" stroke="#840000" stroke-width="1.2"/>
<text x="1256.4" y="772.3" fill="#a90000" font-size="16.5" text-anchor="middle" textLength="9.9" lengthAdjust="spacing">2</text>
<polygon points="1271.4,775.4 1280.0,765.2 1349.5,765.2 1349.5,785.6 1280.0,785.6" stroke="#840000" stroke-width="1.2" fill="none"/>
<text x="1284.0" y="781.3" fill="#840000" font-size="16.5" text-anchor="start" textLength="57.5" lengthAdjust="spacing">SD_SCK</text>
<rect x="1230.6" y="794.8" width="11.2" height="2.4" stroke="#840000" stroke-width="1.0" fill="none"/>
<line x1="1241.8" y1="796.0" x2="1271.4" y2="796.0" stroke="#840000" stroke-width="1.2"/>
<text x="1256.4" y="792.9" fill="#a90000" font-size="16.5" text-anchor="middle" textLength="9.9" lengthAdjust="spacing">3</text>
<polygon points="1271.4,796.0 1280.0,785.8 1366.8,785.8 1366.8,806.2 1280.0,806.2" stroke="#840000" stroke-width="1.2" fill="none"/>
<text x="1284.0" y="801.9" fill="#840000" font-size="16.5" text-anchor="start" textLength="74.8" lengthAdjust="spacing">LCD_ENCA</text>
<rect x="1230.6" y="815.0" width="11.2" height="2.4" stroke="#840000" stroke-width="1.0" fill="none"/>
<line x1="1241.8" y1="816.2" x2="1271.4" y2="816.2" stroke="#840000" stroke-width="1.2"/>
<text x="1256.4" y="813.1" fill="#a90000" font-size="16.5" text-anchor="middle" textLength="9.9" lengthAdjust="spacing">4</text>
<polygon points="1271.4,816.2 1280.0,806.0 1339.4,806.0 1339.4,826.4 1280.0,826.4" stroke="#840000" stroke-width="1.2" fill="none"/>
<text x="1284.0" y="822.1" fill="#840000" font-size="16.5" text-anchor="start" textLength="47.4" lengthAdjust="spacing">SD_CS</text>
<rect x="1230.6" y="835.9" width="11.2" height="2.4" stroke="#840000" stroke-width="1.0" fill="none"/>
<line x1="1241.8" y1="837.1" x2="1271.4" y2="837.1" stroke="#840000" stroke-width="1.2"/>
<text x="1256.4" y="834.0" fill="#a90000" font-size="16.5" text-anchor="middle" textLength="9.9" lengthAdjust="spacing">5</text>
<polygon points="1271.4,837.1 1280.0,826.9 1368.6,826.9 1368.6,847.3 1280.0,847.3" stroke="#840000" stroke-width="1.2" fill="none"/>
<text x="1284.0" y="843.0" fill="#840000" font-size="16.5" text-anchor="start" textLength="76.6" lengthAdjust="spacing">LCD_ENCB</text>
<rect x="1230.6" y="856.1" width="11.2" height="2.4" stroke="#840000" stroke-width="1.0" fill="none"/>
<line x1="1241.8" y1="857.3" x2="1271.4" y2="857.3" stroke="#840000" stroke-width="1.2"/>
<text x="1256.4" y="854.2" fill="#a90000" font-size="16.5" text-anchor="middle" textLength="9.9" lengthAdjust="spacing">6</text>
<polygon points="1271.4,857.3 1280.0,847.1 1356.2,847.1 1356.2,867.5 1280.0,867.5" stroke="#840000" stroke-width="1.2" fill="none"/>
<text x="1284.0" y="863.2" fill="#840000" font-size="16.5" text-anchor="start" textLength="64.2" lengthAdjust="spacing">SD_MOSI</text>
<rect x="1230.6" y="876.0" width="11.2" height="2.4" stroke="#840000" stroke-width="1.0" fill="none"/>
<line x1="1241.8" y1="877.2" x2="1271.4" y2="877.2" stroke="#840000" stroke-width="1.2"/>
<text x="1256.4" y="874.1" fill="#a90000" font-size="16.5" text-anchor="middle" textLength="9.9" lengthAdjust="spacing">7</text>
<polygon points="1271.4,877.2 1280.0,867.0 1346.6,867.0 1346.6,887.4 1280.0,887.4" stroke="#840000" stroke-width="1.2" fill="none"/>
<text x="1284.0" y="883.1" fill="#840000" font-size="16.5" text-anchor="start" textLength="54.6" lengthAdjust="spacing">SD_DET</text>
<rect x="1230.6" y="896.9" width="11.2" height="2.4" stroke="#840000" stroke-width="1.0" fill="none"/>
<line x1="1241.8" y1="898.1" x2="1271.4" y2="898.1" stroke="#840000" stroke-width="1.2"/>
<text x="1256.4" y="895.0" fill="#a90000" font-size="16.5" text-anchor="middle" textLength="9.9" lengthAdjust="spacing">8</text>
<polygon points="1271.4,898.1 1280.0,887.9 1329.3,887.9 1329.3,908.3 1280.0,908.3" stroke="#840000" stroke-width="1.2" fill="none"/>
<text x="1284.0" y="904.0" fill="#840000" font-size="16.5" text-anchor="start" textLength="37.3" lengthAdjust="spacing">NRST</text>
<rect x="1230.6" y="917.1" width="11.2" height="2.4" stroke="#840000" stroke-width="1.0" fill="none"/>
<line x1="1241.8" y1="918.3" x2="1271.4" y2="918.3" stroke="#840000" stroke-width="1.2"/>
<text x="1256.4" y="915.2" fill="#a90000" font-size="16.5" text-anchor="middle" textLength="9.9" lengthAdjust="spacing">9</text>
<rect x="1230.6" y="938.4" width="11.2" height="2.4" stroke="#840000" stroke-width="1.0" fill="none"/>
<line x1="1241.8" y1="939.6" x2="1271.4" y2="939.6" stroke="#840000" stroke-width="1.2"/>
<text x="1256.4" y="936.5" fill="#a90000" font-size="16.5" text-anchor="middle" textLength="18.9" lengthAdjust="spacing">10</text>
<text x="1229.0" y="717.9" fill="#006464" font-size="16.5" text-anchor="middle" textLength="90.0" lengthAdjust="spacing">Conn_01x10</text>
<text x="1228.8" y="734.7" fill="#006464" font-size="16.5" text-anchor="middle" textLength="28.8" lengthAdjust="spacing">J10</text>
<polyline points="1271.4,918.3 1282.2,918.3 1282.2,928.4" stroke="#009600" stroke-width="1.3" fill="none"/>
<polygon points="1271.8,928.4 1292.6,928.4 1282.2,939.2" stroke="#840000" stroke-width="1.2" fill="none"/>
<text x="1282.2" y="965.1" fill="#006464" font-size="16.5" text-anchor="middle" textLength="29.7" lengthAdjust="spacing">GND</text>
<line x1="1266.4" y1="934.2" x2="1276.4" y2="944.2" stroke="#0000c2" stroke-width="1.3"/>
<line x1="1276.4" y1="934.2" x2="1266.4" y2="944.2" stroke="#0000c2" stroke-width="1.3"/>
<line x1="1424.8" y1="785.5" x2="1424.8" y2="796.0" stroke="#840000" stroke-width="1.2"/>
<rect x="1416.2" y="796.0" width="17.2" height="41.6" stroke="#840000" stroke-width="2.2" fill="none"/>
<line x1="1424.8" y1="837.6" x2="1424.8" y2="848.3" stroke="#840000" stroke-width="1.2"/>
<line x1="1445.4" y1="785.5" x2="1445.4" y2="796.0" stroke="#840000" stroke-width="1.2"/>
<rect x="1436.8" y="796.0" width="17.2" height="41.6" stroke="#840000" stroke-width="2.2" fill="none"/>
<line x1="1445.4" y1="837.6" x2="1445.4" y2="848.3" stroke="#840000" stroke-width="1.2"/>
<line x1="1466.0" y1="785.5" x2="1466.0" y2="796.0" stroke="#840000" stroke-width="1.2"/>
<rect x="1457.4" y="796.0" width="17.2" height="41.6" stroke="#840000" stroke-width="2.2" fill="none"/>
<line x1="1466.0" y1="837.6" x2="1466.0" y2="848.3" stroke="#840000" stroke-width="1.2"/>
<polyline points="1424.8,785.5 1466.0,785.5" stroke="#009600" stroke-width="1.3" fill="none"/>
<circle cx="1445.4" cy="785.5" r="4.3" fill="#009600"/>
<polyline points="1445.4,785.5 1445.4,775.9" stroke="#009600" stroke-width="1.3" fill="none"/>
<line x1="1445.4" y1="775.9" x2="1445.4" y2="755.5" stroke="#840000" stroke-width="1.2"/>
<polyline points="1439.0,766.0 1445.4,755.5 1451.8,766.0" stroke="#840000" stroke-width="1.2" fill="none"/>
<text x="1445.4" y="740.7" fill="#006464" font-size="16.5" text-anchor="middle" textLength="43.7" lengthAdjust="spacing">+3.3V</text>
<text x="1384.3" y="812.1" fill="#006464" font-size="16.5" text-anchor="start" textLength="29.7" lengthAdjust="spacing">R29</text>
<text x="1384.3" y="832.3" fill="#006464" font-size="16.5" text-anchor="start" textLength="28.8" lengthAdjust="spacing">10K</text>
<text x="1437.0" y="812.1" fill="#006464" font-size="16.5" text-anchor="start" textLength="29.7" lengthAdjust="spacing">R30</text>
<text x="1437.0" y="832.3" fill="#006464" font-size="16.5" text-anchor="start" textLength="28.8" lengthAdjust="spacing">10K</text>
<text x="1488.2" y="812.1" fill="#006464" font-size="16.5" text-anchor="start" textLength="28.8" lengthAdjust="spacing">R31</text>
<text x="1488.2" y="832.3" fill="#006464" font-size="16.5" text-anchor="start" textLength="28.8" lengthAdjust="spacing">10K</text>
<polygon points="1424.8,848.3 1414.6,856.9 1414.6,942.6 1435.0,942.6 1435.0,856.9" stroke="#840000" stroke-width="1.2" fill="none"/>
<g transform="translate(1424.8,934.3) rotate(-90)"><text x="0" y="5.9" fill="#840000" font-size="16.5" text-anchor="start" textLength="73.4" lengthAdjust="spacing">LCD_ENCA</text></g>
<polygon points="1445.4,848.3 1435.2,856.9 1435.2,943.5 1455.6,943.5 1455.6,856.9" stroke="#840000" stroke-width="1.2" fill="none"/>
<g transform="translate(1445.4,935.2) rotate(-90)"><text x="0" y="5.9" fill="#840000" font-size="16.5" text-anchor="start" textLength="74.3" lengthAdjust="spacing">LCD_ENCB</text></g>
<polygon points="1466.0,848.3 1455.8,856.9 1455.8,932.5 1476.2,932.5 1476.2,856.9" stroke="#840000" stroke-width="1.2" fill="none"/>
<g transform="translate(1466.0,924.2) rotate(-90)"><text x="0" y="5.9" fill="#840000" font-size="16.5" text-anchor="start" textLength="63.3" lengthAdjust="spacing">LCD_BTN</text></g>
</g>
</svg>
<div id="status"></div>
<svg style="position:absolute;left:0;top:0" width="2492" height="1404"><text x="1156.6" y="19.3" font-family="Liberation Sans" font-weight="bold" font-size="15.5" fill="#3d3d3d" textLength="177" lengthAdjust="spacingAndGlyphs">board — Schematic Editor</text><text x="6.3" y="51.1" font-family="Liberation Sans" font-size="14.5" fill="#3c3c3c" textLength="23.5" lengthAdjust="spacingAndGlyphs">File</text><text x="46" y="51.1" font-family="Liberation Sans" font-size="14.5" fill="#3c3c3c" textLength="26.6" lengthAdjust="spacingAndGlyphs">Edit</text><text x="88.8" y="51.1" font-family="Liberation Sans" font-size="14.5" fill="#3c3c3c" textLength="33.6" lengthAdjust="spacingAndGlyphs">View</text><text x="138" y="51.1" font-family="Liberation Sans" font-size="14.5" fill="#3c3c3c" textLength="35.7" lengthAdjust="spacingAndGlyphs">Place</text><text x="190" y="51.1" font-family="Liberation Sans" font-size="14.5" fill="#3c3c3c" textLength="47.5" lengthAdjust="spacingAndGlyphs">Inspect</text><text x="254" y="51.1" font-family="Liberation Sans" font-size="14.5" fill="#3c3c3c" textLength="35.3" lengthAdjust="spacingAndGlyphs">Tools</text><text x="305" y="51.1" font-family="Liberation Sans" font-size="14.5" fill="#3c3c3c" textLength="80.5" lengthAdjust="spacingAndGlyphs">Preferences</text><text x="400.9" y="51.1" font-family="Liberation Sans" font-size="14.5" fill="#3c3c3c" textLength="30.3" lengthAdjust="spacingAndGlyphs">Help</text><text x="3.6" y="1397.4" font-family="Liberation Sans" font-size="13" fill="#3c3c3c" textLength="548.9" lengthAdjust="spacingAndGlyphs" xml:space="preserve">File '/home/kai/projects/pcbs/3D-Printer-Driver-Board/PCB/board.kicad_sch' saved.</text><text x="1261" y="1397.4" font-family="Liberation Sans" font-size="13" fill="#3c3c3c" textLength="39.0" lengthAdjust="spacingAndGlyphs" xml:space="preserve">Z 2.25</text><text x="1346" y="1397.4" font-family="Liberation Sans" font-size="13" fill="#3c3c3c" textLength="101.0" lengthAdjust="spacingAndGlyphs" xml:space="preserve">X 11450  Y 9750</text><text x="1537.5" y="1397.4" font-family="Liberation Sans" font-size="13" fill="#3c3c3c" textLength="189.5" lengthAdjust="spacingAndGlyphs" xml:space="preserve">dx 11450  dy 9750  dist 15039</text><text x="1845" y="1397.4" font-family="Liberation Sans" font-size="13" fill="#3c3c3c" textLength="46.0" lengthAdjust="spacingAndGlyphs" xml:space="preserve">grid 50</text><text x="2066" y="1397.4" font-family="Liberation Sans" font-size="13" fill="#3c3c3c" textLength="27.0" lengthAdjust="spacingAndGlyphs" xml:space="preserve">mils</text><text x="2132.5" y="1397.4" font-family="Liberation Sans" font-size="13" fill="#3c3c3c" textLength="90.5" lengthAdjust="spacingAndGlyphs" xml:space="preserve">Select item(s)</text></svg>
</body></html>
